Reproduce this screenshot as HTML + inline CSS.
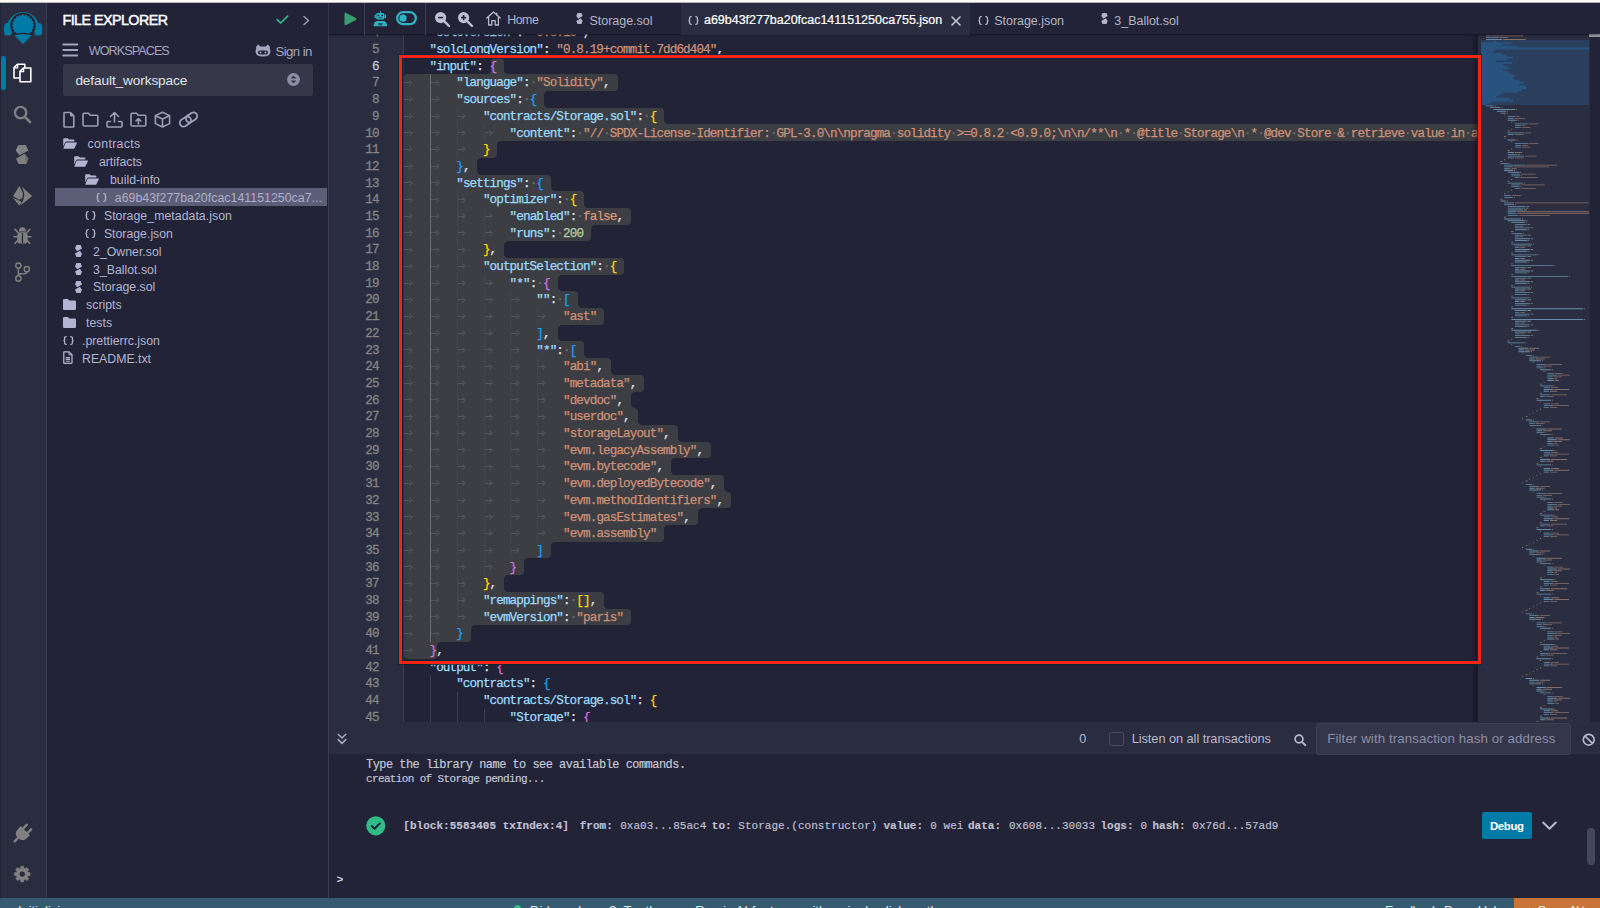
<!DOCTYPE html>
<html><head><meta charset="utf-8"><style>
*{margin:0;padding:0;box-sizing:border-box}
html,body{width:1600px;height:908px;overflow:hidden;background:#222336;font-family:"Liberation Sans",sans-serif}
.a{position:absolute}
.full{position:absolute;left:0;top:0;width:1600px;height:908px}

.code{position:absolute;font-family:"Liberation Mono",monospace;font-size:12.6px;letter-spacing:-0.885px;line-height:16.695px;white-space:pre;height:16.695px;-webkit-text-stroke:0.25px currentColor}
.k{color:#9cdcfe} .s{color:#ce9178} .f{color:#d99a7c} .n{color:#b5cea8} .p{color:#e0e0e0}
.b0{color:#ffd700} .b1{color:#da70d6} .b2{color:#179fff}
.ws{color:#6a6b70}
.sel{position:absolute;background:#3d3e43}
.arrow{position:absolute;width:7px;height:4px}
.arrow:before{content:"";position:absolute;left:0;top:1.5px;width:6px;height:1px;background:#55565b}
.arrow:after{content:"";position:absolute;left:3.5px;top:0;width:2.5px;height:2.5px;border-top:1px solid #55565b;border-right:1px solid #55565b;transform:rotate(45deg)}
</style></head>
<body>
<div class="a" style="left:0;top:0;width:1600px;height:3px;background:linear-gradient(#fdf9f6 0%, #fdf9f6 55%, #9a9096 100%)"></div>
<div class="a" style="left:0;top:3px;width:47px;height:895px;background:#2a2c3f;border-right:1px solid #3a3d51"></div>
<div class="a" style="left:0;top:3px;width:1px;height:895px;background:#232436"></div>
<div class="a" style="left:1px;top:56px;width:4.5px;height:34px;background:#007aa6;border-radius:3px"></div>
<svg class="a" style="left:0px;top:0px;overflow:visible" width="47" height="47" viewBox="0 0 47 47"><path d="M8.6 28 A14.4 14.4 0 0 1 37.4 28" fill="none" stroke="#007aa6" stroke-width="3.2"/><rect x="4" y="23" width="8" height="12.6" rx="3.6" fill="#007aa6"/><rect x="34.2" y="23" width="8" height="12.6" rx="3.6" fill="#007aa6"/><circle cx="23" cy="25.4" r="12.6" fill="#2b1f2d"/><path d="M22.34 14.22 L23.22 14.20 L23.97 15.55 L24.74 15.65 L25.83 14.56 L26.67 14.82 L26.97 16.33 L27.67 16.67 L29.04 15.97 L29.76 16.47 L29.58 18.00 L30.14 18.54 L31.66 18.29 L32.19 19.00 L31.54 20.39 L31.91 21.08 L33.43 21.32 L33.72 22.15 L32.67 23.28 L32.81 24.04 L34.18 24.74 L34.20 25.62 L32.85 26.37 L32.75 27.14 L33.84 28.23 L33.58 29.07 L32.07 29.37 L31.73 30.07 L32.43 31.44 L31.93 32.16 L30.40 31.98 L29.86 32.54 L30.11 34.06 L29.40 34.59 L28.01 33.94 L27.32 34.31 L27.08 35.83 L26.25 36.12 L25.12 35.07 L24.36 35.21 L23.66 36.58 L22.78 36.60 L22.03 35.25 L21.26 35.15 L20.17 36.24 L19.33 35.98 L19.03 34.47 L18.33 34.13 L16.96 34.83 L16.24 34.33 L16.42 32.80 L15.86 32.26 L14.34 32.51 L13.81 31.80 L14.46 30.41 L14.09 29.72 L12.57 29.48 L12.28 28.65 L13.33 27.52 L13.19 26.76 L11.82 26.06 L11.80 25.18 L13.15 24.43 L13.25 23.66 L12.16 22.57 L12.42 21.73 L13.93 21.43 L14.27 20.73 L13.57 19.36 L14.07 18.64 L15.60 18.82 L16.14 18.26 L15.89 16.74 L16.60 16.21 L17.99 16.86 L18.68 16.49 L18.92 14.97 L19.75 14.68 L20.88 15.73 L21.64 15.59 Z" fill="#007aa6"/><path d="M13.6 34.6 Q23 31.4 32.4 34.6 L23 44.2 Z" fill="#007aa6"/><path d="M13.2 35 Q23 31.8 32.8 35" fill="none" stroke="#2b1f2d" stroke-width="1.1"/></svg>
<svg class="a" style="left:13px;top:63px;overflow:visible" width="20" height="21" viewBox="0 0 20 21"><g transform="translate(0.2 0.4)"><path d="M4.2 0.8 H11.6 V14.6 H0.8 V4.2 Z" fill="none" stroke="#ffffff" stroke-width="1.6" stroke-linejoin="round"/><path d="M0.8 4.4 H4.4 V0.8" fill="none" stroke="#ffffff" stroke-width="1.3"/></g><g transform="translate(6.2 4.2)"><path d="M4.2 0.8 H11.6 V14.6 H0.8 V4.2 Z" fill="#2a2c3f" stroke="#ffffff" stroke-width="1.6" stroke-linejoin="round"/><path d="M0.8 4.4 H4.4 V0.8" fill="none" stroke="#ffffff" stroke-width="1.3"/></g></svg>
<svg class="a" style="left:13px;top:104.5px;overflow:visible" width="19" height="19" viewBox="0 0 19 19"><circle cx="7.6" cy="7.6" r="5.7" fill="none" stroke="#808080" stroke-width="2.4"/><path d="M11.8 11.8 L17 17" stroke="#808080" stroke-width="2.6" stroke-linecap="round"/></svg>
<svg class="a" style="left:15.85px;top:144.9px;overflow:visible" width="12.4" height="19" viewBox="0 0 12.4 19"><path d="M2.4 0 H9.8 L12.4 5.6 L3.7 10.3 L0 5.4 Z" fill="#808080"/><path d="M2.4 0 L0 5.4 L3.7 10.3 Z" fill="#8e8e8e"/><path d="M10 19 H2.6 L0 13.4 L8.7 8.7 L12.4 13.6 Z" fill="#808080"/><path d="M10 19 L12.4 13.6 L8.7 8.7 Z" fill="#6e6e6e"/></svg>
<svg class="a" style="left:12.5px;top:185.6px;overflow:visible" width="19.2" height="19.8" viewBox="0 0 19.2 19.8"><g fill="#808080"><path d="M6.2 0 L0 10.2 L6.2 13.8 L9 12.2 Q10.4 9.8 9.8 6.4 Z"/><path d="M0 11.8 L6.2 19.6 L8.6 16.4 L8 15.4 Z"/><path d="M8.6 0.6 Q12 6 11 11.6 Q10.6 14.6 7.6 19.4 L19.2 10 Z"/></g></svg>
<svg class="a" style="left:14px;top:227px;overflow:visible" width="17" height="17" viewBox="0 0 17 17"><path d="M4.8 4.6 Q5 0.3 8.4 0.3 Q11.8 0.3 12 4.6 Z" fill="#808080"/><rect x="3.2" y="5.2" width="10.4" height="11.4" rx="3.4" fill="#808080"/><rect x="7.8" y="6.2" width="1.3" height="10" fill="#2a2c3f"/><path d="M1 2.4 L4.2 5.6 M15.8 2.4 L12.6 5.6 M0 9.8 H3.6 M16.8 9.8 H13.2 M1 16.4 L4 13.4 M15.8 16.4 L12.8 13.4" stroke="#808080" stroke-width="1.5" stroke-linecap="round"/></svg>
<svg class="a" style="left:14.5px;top:261.5px;overflow:visible" width="15.5" height="20.5" viewBox="0 0 15.5 20.5"><g fill="none" stroke="#808080" stroke-width="1.5"><circle cx="3.4" cy="3.6" r="2.6"/><circle cx="3.4" cy="16.4" r="2.6"/><circle cx="11.8" cy="7.2" r="2.6"/><path d="M3.4 6.2 V13.8 M11.8 9.8 Q11.8 11.8 9.2 11.8 H5.6 Q3.4 11.8 3.4 13.8"/></g></svg>
<svg class="a" style="left:12.3px;top:823.6px;overflow:visible" width="20" height="20" viewBox="0 0 20 20"><g transform="rotate(45 10 10)"><path d="M3.6 5.2 H16.4 V9.6 Q16.4 15.6 10 15.6 Q3.6 15.6 3.6 9.6 Z" fill="#808080"/><rect x="5.6" y="-1" width="2.5" height="6.6" rx="1.2" fill="#808080"/><rect x="11.9" y="-1" width="2.5" height="6.6" rx="1.2" fill="#808080"/><rect x="8.8" y="15" width="2.4" height="6.6" rx="1.2" fill="#808080"/></g></svg>
<svg class="a" style="left:13.8px;top:866.2px;overflow:visible" width="16.5" height="16.2" viewBox="0 0 16.5 16.2"><path d="M6.60 2.33 L6.79 0.23 L9.71 0.23 L9.90 2.33 L11.16 2.85 L12.78 1.51 L14.84 3.57 L13.50 5.19 L14.02 6.45 L16.12 6.64 L16.12 9.56 L14.02 9.75 L13.50 11.01 L14.84 12.63 L12.78 14.69 L11.16 13.35 L9.90 13.87 L9.71 15.97 L6.79 15.97 L6.60 13.87 L5.34 13.35 L3.72 14.69 L1.66 12.63 L3.00 11.01 L2.48 9.75 L0.38 9.56 L0.38 6.64 L2.48 6.45 L3.00 5.19 L1.66 3.57 L3.72 1.51 L5.34 2.85 Z" fill="#808080" stroke="#808080" stroke-width="0.6" stroke-linejoin="round"/><circle cx="8.25" cy="8.1" r="2.7" fill="#2a2c3f"/></svg>
<div class="a" style="left:47px;top:3px;width:282px;height:895px;background:#222336;border-right:1px solid #3a3d51"></div>
<div class="a " style="left:62.50px;top:9.95px;height:20px;line-height:20px;font-family:'Liberation Sans',sans-serif;font-size:14.3px;font-weight:400;color:#ffffff;white-space:pre;letter-spacing:-0.546px;-webkit-text-stroke:0.45px #ffffff;">FILE EXPLORER</div>
<svg class="a" style="left:276px;top:15px;overflow:visible" width="13" height="10" viewBox="0 0 13 10"><path d="M1.2 4.6 L4.6 8 L11.6 1.2" fill="none" stroke="#32ba89" stroke-width="1.7" stroke-linecap="round" stroke-linejoin="round"/></svg>
<svg class="a" style="left:302px;top:15px;overflow:visible" width="9" height="11" viewBox="0 0 9 11"><path d="M2 1.5 L6.5 5.5 L2 9.5" fill="none" stroke="#9a9bb0" stroke-width="1.6" stroke-linecap="round" stroke-linejoin="round"/></svg>
<svg class="a" style="left:62px;top:43px;overflow:visible" width="17" height="14" viewBox="0 0 17 14"><path d="M1.3 1.5 H15.3 M1.3 7 H15.3 M1.3 12.5 H15.3" stroke="#a4a5c0" stroke-width="1.9" stroke-linecap="round"/></svg>
<div class="a " style="left:88.80px;top:41.93px;height:18px;line-height:18px;font-family:'Liberation Sans',sans-serif;font-size:12.6px;font-weight:400;color:#a4a5c0;white-space:pre;letter-spacing:-0.932px;">WORKSPACES</div>
<svg class="a" style="left:255px;top:44px;overflow:visible" width="16" height="13" viewBox="0 0 16 13"><path d="M1.2 2.5 L3.2 0.6 L5.4 2.6 H10.6 L12.8 0.6 L14.8 2.5 V5 Q15.6 6.4 15.4 8.2 Q15 12.4 8 12.4 Q1 12.4 0.6 8.2 Q0.4 6.4 1.2 5 Z" fill="#a4a5c0"/><rect x="3" y="6.6" width="10" height="3.8" rx="1.9" fill="#222336"/><circle cx="5.6" cy="8.5" r="0.9" fill="#a4a5c0"/><circle cx="10.4" cy="8.5" r="0.9" fill="#a4a5c0"/></svg>
<div class="a " style="left:275.40px;top:42.63px;height:18px;line-height:18px;font-family:'Liberation Sans',sans-serif;font-size:13.2px;font-weight:400;color:#a4a5c0;white-space:pre;letter-spacing:-0.560px;">Sign in</div>
<div class="a" style="left:63px;top:64px;width:249.5px;height:32px;background:#363849;border-radius:3px"></div>
<div class="a " style="left:75.40px;top:70.69px;height:19px;line-height:19px;font-family:'Liberation Sans',sans-serif;font-size:13.6px;font-weight:400;color:#e2e2ec;white-space:pre;letter-spacing:-0.088px;">default_workspace</div>
<svg class="a" style="left:287px;top:73px;overflow:visible" width="13" height="13" viewBox="0 0 13 13"><circle cx="6.5" cy="6.5" r="6.4" fill="#8d8ea4"/><path d="M3.6 5.6 L6.5 2.6 L9.4 5.6 Z M3.6 7.4 L6.5 10.4 L9.4 7.4 Z" fill="#363849"/></svg>
<svg class="a" style="left:63px;top:111px;overflow:visible" width="12" height="17" viewBox="0 0 12 17"><path d="M1.5 1.5 H7.5 L10.8 4.8 V15.5 Q10.8 16 10.3 16 H1.7 Q1 16 1 15.3 V2 Q1 1.5 1.5 1.5 Z" fill="none" stroke="#9c9db8" stroke-width="1.6" stroke-linejoin="round" stroke-linecap="round"/><path d="M7.5 1.5 V5 H10.8" fill="#9c9db8" stroke="#9c9db8" stroke-width="1"/></svg>
<svg class="a" style="left:82px;top:112px;overflow:visible" width="17" height="15" viewBox="0 0 17 15"><path d="M2 1.3 H6.5 L8.3 3.3 H14.5 Q15.8 3.3 15.8 4.6 V12.8 Q15.8 14 14.5 14 H2.3 Q1 14 1 12.8 V2.5 Q1 1.3 2 1.3 Z" fill="none" stroke="#9c9db8" stroke-width="1.6" stroke-linejoin="round" stroke-linecap="round"/></svg>
<svg class="a" style="left:106px;top:111px;overflow:visible" width="17" height="17" viewBox="0 0 17 17"><path d="M8.5 1.5 V11 M4.5 5.5 L8.5 1.5 L12.5 5.5" fill="none" stroke="#9c9db8" stroke-width="1.6" stroke-linejoin="round" stroke-linecap="round"/><path d="M4.5 10.5 H2 Q1 10.5 1 11.5 V15 Q1 16 2 16 H15 Q16 16 16 15 V11.5 Q16 10.5 15 10.5 H12.5" fill="none" stroke="#9c9db8" stroke-width="1.6" stroke-linejoin="round" stroke-linecap="round"/></svg>
<svg class="a" style="left:130px;top:112px;overflow:visible" width="17" height="15" viewBox="0 0 17 15"><path d="M2 1.3 H6.5 L8.3 3.3 H14.5 Q15.8 3.3 15.8 4.6 V12.8 Q15.8 14 14.5 14 H2.3 Q1 14 1 12.8 V2.5 Q1 1.3 2 1.3 Z" fill="none" stroke="#9c9db8" stroke-width="1.6" stroke-linejoin="round" stroke-linecap="round"/><path d="M8.4 12 V7 M6 9 L8.4 6.6 L10.8 9" fill="none" stroke="#9c9db8" stroke-width="1.6" stroke-linejoin="round" stroke-linecap="round" stroke-width="1.8"/></svg>
<svg class="a" style="left:154px;top:111px;overflow:visible" width="17" height="17" viewBox="0 0 17 17"><path d="M8.5 1.2 L15.6 4.6 V12.6 L8.5 16 L1.4 12.6 V4.6 Z M1.6 4.7 L8.5 8 L15.4 4.7 M8.5 8 V15.8" fill="none" stroke="#9c9db8" stroke-width="1.6" stroke-linejoin="round" stroke-linecap="round"/></svg>
<svg class="a" style="left:177.5px;top:111px;overflow:visible" width="21" height="17" viewBox="0 0 21 17"><g transform="rotate(-34 10.5 8.5)" fill="none" stroke="#9c9db8" stroke-width="1.9"><rect x="0.8" y="4.8" width="12" height="7.4" rx="3.7"/><rect x="8.2" y="4.8" width="12" height="7.4" rx="3.7"/></g></svg>
<div class="a" style="left:55.3px;top:188.4px;width:272.2px;height:17.9px;background:#5c5e78"></div>
<svg class="a" style="left:62.9px;top:138.0px;overflow:visible" width="14" height="11" viewBox="0 0 14 11"><path d="M0.2 1.2 Q0.2 0.2 1.2 0.2 H4.6 L6 1.6 H10.4 Q11.4 1.6 11.4 2.6 V3.6 H3.2 Q2.4 3.6 2 4.4 L0.2 8.6 Z" fill="#b3b4d2"/><path d="M3.2 4.6 H13.4 Q14.2 4.6 13.8 5.4 L11.4 10.2 Q11.1 10.8 10.4 10.8 H0.8 Q0.2 10.8 0.4 10.2 L2.4 5.2 Q2.6 4.6 3.2 4.6 Z" fill="#b3b4d2"/></svg>
<div class="a " style="left:87.60px;top:136.44px;height:17px;line-height:17px;font-family:'Liberation Sans',sans-serif;font-size:12.3px;font-weight:400;color:#b3b4d2;white-space:pre;letter-spacing:0.325px;">contracts</div>
<svg class="a" style="left:73.6px;top:155.88px;overflow:visible" width="14" height="11" viewBox="0 0 14 11"><path d="M0.2 1.2 Q0.2 0.2 1.2 0.2 H4.6 L6 1.6 H10.4 Q11.4 1.6 11.4 2.6 V3.6 H3.2 Q2.4 3.6 2 4.4 L0.2 8.6 Z" fill="#b3b4d2"/><path d="M3.2 4.6 H13.4 Q14.2 4.6 13.8 5.4 L11.4 10.2 Q11.1 10.8 10.4 10.8 H0.8 Q0.2 10.8 0.4 10.2 L2.4 5.2 Q2.6 4.6 3.2 4.6 Z" fill="#b3b4d2"/></svg>
<div class="a " style="left:98.90px;top:154.32px;height:17px;line-height:17px;font-family:'Liberation Sans',sans-serif;font-size:12.3px;font-weight:400;color:#b3b4d2;white-space:pre;">artifacts</div>
<svg class="a" style="left:84.6px;top:173.76px;overflow:visible" width="14" height="11" viewBox="0 0 14 11"><path d="M0.2 1.2 Q0.2 0.2 1.2 0.2 H4.6 L6 1.6 H10.4 Q11.4 1.6 11.4 2.6 V3.6 H3.2 Q2.4 3.6 2 4.4 L0.2 8.6 Z" fill="#b3b4d2"/><path d="M3.2 4.6 H13.4 Q14.2 4.6 13.8 5.4 L11.4 10.2 Q11.1 10.8 10.4 10.8 H0.8 Q0.2 10.8 0.4 10.2 L2.4 5.2 Q2.6 4.6 3.2 4.6 Z" fill="#b3b4d2"/></svg>
<div class="a " style="left:110.00px;top:172.20px;height:17px;line-height:17px;font-family:'Liberation Sans',sans-serif;font-size:12.3px;font-weight:400;color:#b3b4d2;white-space:pre;">build-info</div>
<svg class="a" style="left:96.4px;top:193.04000000000002px;overflow:visible" width="11" height="9" viewBox="0 0 11 9"><path d="M3.2 0.6 Q1.6 0.6 1.6 2 V3.4 Q1.6 4.5 0.5 4.5 Q1.6 4.5 1.6 5.6 V7 Q1.6 8.4 3.2 8.4 M7.8 0.6 Q9.4 0.6 9.4 2 V3.4 Q9.4 4.5 10.5 4.5 Q9.4 4.5 9.4 5.6 V7 Q9.4 8.4 7.8 8.4" fill="none" stroke="#aeafc8" stroke-width="1.3" stroke-linecap="round"/></svg>
<div class="a " style="left:114.75px;top:190.08px;height:17px;line-height:17px;font-family:'Liberation Sans',sans-serif;font-size:12.3px;font-weight:400;color:#aeafc8;white-space:pre;letter-spacing:0.049px;">a69b43f277ba20fcac141151250ca7...</div>
<svg class="a" style="left:85.0px;top:210.92000000000002px;overflow:visible" width="11" height="9" viewBox="0 0 11 9"><path d="M3.2 0.6 Q1.6 0.6 1.6 2 V3.4 Q1.6 4.5 0.5 4.5 Q1.6 4.5 1.6 5.6 V7 Q1.6 8.4 3.2 8.4 M7.8 0.6 Q9.4 0.6 9.4 2 V3.4 Q9.4 4.5 10.5 4.5 Q9.4 4.5 9.4 5.6 V7 Q9.4 8.4 7.8 8.4" fill="none" stroke="#b3b4d2" stroke-width="1.3" stroke-linecap="round"/></svg>
<div class="a " style="left:103.90px;top:207.96px;height:17px;line-height:17px;font-family:'Liberation Sans',sans-serif;font-size:12.3px;font-weight:400;color:#b3b4d2;white-space:pre;letter-spacing:0.041px;">Storage_metadata.json</div>
<svg class="a" style="left:85.0px;top:228.8px;overflow:visible" width="11" height="9" viewBox="0 0 11 9"><path d="M3.2 0.6 Q1.6 0.6 1.6 2 V3.4 Q1.6 4.5 0.5 4.5 Q1.6 4.5 1.6 5.6 V7 Q1.6 8.4 3.2 8.4 M7.8 0.6 Q9.4 0.6 9.4 2 V3.4 Q9.4 4.5 10.5 4.5 Q9.4 4.5 9.4 5.6 V7 Q9.4 8.4 7.8 8.4" fill="none" stroke="#b3b4d2" stroke-width="1.3" stroke-linecap="round"/></svg>
<div class="a " style="left:103.90px;top:225.84px;height:17px;line-height:17px;font-family:'Liberation Sans',sans-serif;font-size:12.3px;font-weight:400;color:#b3b4d2;white-space:pre;">Storage.json</div>
<svg class="a" style="left:75.3px;top:245.48px;overflow:visible" width="7" height="12" viewBox="0 0 7 12"><g fill="#b3b4d2"><path d="M1.4 0 H5.6 L7 3.4 L2.1 6.3 L0 3.2 Z"/><path d="M5.6 12 H1.4 L0 8.6 L4.9 5.7 L7 8.8 Z"/></g></svg>
<div class="a " style="left:93.10px;top:243.72px;height:17px;line-height:17px;font-family:'Liberation Sans',sans-serif;font-size:12.3px;font-weight:400;color:#b3b4d2;white-space:pre;">2_Owner.sol</div>
<svg class="a" style="left:75.3px;top:263.36px;overflow:visible" width="7" height="12" viewBox="0 0 7 12"><g fill="#b3b4d2"><path d="M1.4 0 H5.6 L7 3.4 L2.1 6.3 L0 3.2 Z"/><path d="M5.6 12 H1.4 L0 8.6 L4.9 5.7 L7 8.8 Z"/></g></svg>
<div class="a " style="left:93.10px;top:261.60px;height:17px;line-height:17px;font-family:'Liberation Sans',sans-serif;font-size:12.3px;font-weight:400;color:#b3b4d2;white-space:pre;">3_Ballot.sol</div>
<svg class="a" style="left:75.3px;top:281.24px;overflow:visible" width="7" height="12" viewBox="0 0 7 12"><g fill="#b3b4d2"><path d="M1.4 0 H5.6 L7 3.4 L2.1 6.3 L0 3.2 Z"/><path d="M5.6 12 H1.4 L0 8.6 L4.9 5.7 L7 8.8 Z"/></g></svg>
<div class="a " style="left:93.10px;top:279.48px;height:17px;line-height:17px;font-family:'Liberation Sans',sans-serif;font-size:12.3px;font-weight:400;color:#b3b4d2;white-space:pre;">Storage.sol</div>
<svg class="a" style="left:62.6px;top:299.12px;overflow:visible" width="13" height="11" viewBox="0 0 13 11"><path d="M0 1.2 Q0 0 1.2 0 H4.8 L6.3 1.6 H11.8 Q13 1.6 13 2.8 V9.8 Q13 11 11.8 11 H1.2 Q0 11 0 9.8 Z" fill="#b3b4d2"/></svg>
<div class="a " style="left:86.10px;top:297.36px;height:17px;line-height:17px;font-family:'Liberation Sans',sans-serif;font-size:12.3px;font-weight:400;color:#b3b4d2;white-space:pre;">scripts</div>
<svg class="a" style="left:62.6px;top:317.0px;overflow:visible" width="13" height="11" viewBox="0 0 13 11"><path d="M0 1.2 Q0 0 1.2 0 H4.8 L6.3 1.6 H11.8 Q13 1.6 13 2.8 V9.8 Q13 11 11.8 11 H1.2 Q0 11 0 9.8 Z" fill="#b3b4d2"/></svg>
<div class="a " style="left:86.10px;top:315.24px;height:17px;line-height:17px;font-family:'Liberation Sans',sans-serif;font-size:12.3px;font-weight:400;color:#b3b4d2;white-space:pre;">tests</div>
<svg class="a" style="left:62.6px;top:336.08px;overflow:visible" width="11" height="9" viewBox="0 0 11 9"><path d="M3.2 0.6 Q1.6 0.6 1.6 2 V3.4 Q1.6 4.5 0.5 4.5 Q1.6 4.5 1.6 5.6 V7 Q1.6 8.4 3.2 8.4 M7.8 0.6 Q9.4 0.6 9.4 2 V3.4 Q9.4 4.5 10.5 4.5 Q9.4 4.5 9.4 5.6 V7 Q9.4 8.4 7.8 8.4" fill="none" stroke="#b3b4d2" stroke-width="1.3" stroke-linecap="round"/></svg>
<div class="a " style="left:82.00px;top:333.12px;height:17px;line-height:17px;font-family:'Liberation Sans',sans-serif;font-size:12.3px;font-weight:400;color:#b3b4d2;white-space:pre;">.prettierrc.json</div>
<svg class="a" style="left:62.6px;top:351.35999999999996px;overflow:visible" width="10" height="13" viewBox="0 0 10 13"><path d="M1.3 0.8 H6 L9 3.8 V11.8 Q9 12.3 8.5 12.3 H1.3 Q0.8 12.3 0.8 11.8 V1.3 Q0.8 0.8 1.3 0.8 Z" fill="none" stroke="#b3b4d2" stroke-width="1.3"/><path d="M2.8 6.6 H7 M2.8 8.4 H7 M2.8 10.2 H7" stroke="#b3b4d2" stroke-width="1.1"/><path d="M6 0.8 V3.8 H9" fill="none" stroke="#b3b4d2" stroke-width="1"/></svg>
<div class="a " style="left:82.00px;top:351.00px;height:17px;line-height:17px;font-family:'Liberation Sans',sans-serif;font-size:12.3px;font-weight:400;color:#b3b4d2;white-space:pre;">README.txt</div>
<div class="a" style="left:329px;top:35px;width:75px;height:687px;background:#2a2c3f"></div>
<div class="a" style="left:404px;top:35px;width:1077px;height:687px;background:#222336"></div>
<div class="full" style="clip-path:inset(34.4px 119px 186px 329px)"><div class="sel" style="left:490.77px;top:58px;width:13.35px;height:16px;border-radius:4px 4px 0px 0px"></div>
<div class="sel" style="left:404.00px;top:74px;width:213.60px;height:17px;border-radius:4px 4px 4px 0px"></div>
<div class="sel" style="left:404.00px;top:91px;width:140.17px;height:17px;border-radius:0px 0px 0px 0px"></div>
<div class="sel" style="left:404.00px;top:108px;width:260.32px;height:16px;border-radius:0px 4px 0px 0px"></div>
<div class="sel" style="left:404.00px;top:124px;width:1708.80px;height:17px;border-radius:0px 4px 4px 0px"></div>
<div class="sel" style="left:404.00px;top:141px;width:93.45px;height:17px;border-radius:0px 0px 4px 0px"></div>
<div class="sel" style="left:404.00px;top:158px;width:73.42px;height:17px;border-radius:0px 0px 0px 0px"></div>
<div class="sel" style="left:404.00px;top:175px;width:146.85px;height:16px;border-radius:0px 4px 0px 0px"></div>
<div class="sel" style="left:404.00px;top:191px;width:180.22px;height:17px;border-radius:0px 4px 0px 0px"></div>
<div class="sel" style="left:404.00px;top:208px;width:226.95px;height:17px;border-radius:0px 4px 4px 0px"></div>
<div class="sel" style="left:404.00px;top:225px;width:186.90px;height:16px;border-radius:0px 0px 4px 0px"></div>
<div class="sel" style="left:404.00px;top:241px;width:100.12px;height:17px;border-radius:0px 0px 0px 0px"></div>
<div class="sel" style="left:404.00px;top:258px;width:220.28px;height:17px;border-radius:0px 4px 4px 0px"></div>
<div class="sel" style="left:404.00px;top:275px;width:153.53px;height:16px;border-radius:0px 0px 0px 0px"></div>
<div class="sel" style="left:404.00px;top:291px;width:173.55px;height:17px;border-radius:0px 4px 0px 0px"></div>
<div class="sel" style="left:404.00px;top:308px;width:200.25px;height:17px;border-radius:0px 4px 4px 0px"></div>
<div class="sel" style="left:404.00px;top:325px;width:153.53px;height:16px;border-radius:0px 0px 0px 0px"></div>
<div class="sel" style="left:404.00px;top:341px;width:180.22px;height:17px;border-radius:0px 4px 0px 0px"></div>
<div class="sel" style="left:404.00px;top:358px;width:206.92px;height:17px;border-radius:0px 4px 0px 0px"></div>
<div class="sel" style="left:404.00px;top:375px;width:240.30px;height:17px;border-radius:0px 4px 4px 0px"></div>
<div class="sel" style="left:404.00px;top:392px;width:226.95px;height:16px;border-radius:0px 0px 0px 0px"></div>
<div class="sel" style="left:404.00px;top:408px;width:233.62px;height:17px;border-radius:0px 4px 0px 0px"></div>
<div class="sel" style="left:404.00px;top:425px;width:273.68px;height:17px;border-radius:0px 4px 0px 0px"></div>
<div class="sel" style="left:404.00px;top:442px;width:307.05px;height:16px;border-radius:0px 4px 4px 0px"></div>
<div class="sel" style="left:404.00px;top:458px;width:267.00px;height:17px;border-radius:0px 0px 0px 0px"></div>
<div class="sel" style="left:404.00px;top:475px;width:320.40px;height:17px;border-radius:0px 4px 0px 0px"></div>
<div class="sel" style="left:404.00px;top:492px;width:327.07px;height:16px;border-radius:0px 4px 4px 0px"></div>
<div class="sel" style="left:404.00px;top:508px;width:293.70px;height:17px;border-radius:0px 0px 4px 0px"></div>
<div class="sel" style="left:404.00px;top:525px;width:260.32px;height:17px;border-radius:0px 0px 4px 0px"></div>
<div class="sel" style="left:404.00px;top:542px;width:146.85px;height:16px;border-radius:0px 0px 4px 0px"></div>
<div class="sel" style="left:404.00px;top:558px;width:120.15px;height:17px;border-radius:0px 0px 4px 0px"></div>
<div class="sel" style="left:404.00px;top:575px;width:100.12px;height:17px;border-radius:0px 0px 0px 0px"></div>
<div class="sel" style="left:404.00px;top:592px;width:200.25px;height:17px;border-radius:0px 4px 0px 0px"></div>
<div class="sel" style="left:404.00px;top:609px;width:226.95px;height:16px;border-radius:0px 4px 4px 0px"></div>
<div class="sel" style="left:404.00px;top:625px;width:66.75px;height:17px;border-radius:0px 0px 4px 0px"></div>
<div class="sel" style="left:404.00px;top:642px;width:33.38px;height:17px;border-radius:0px 0px 4px 4px"></div>
<div class="a" style="left:504.12px;top:70px;width:4px;height:4px;background:radial-gradient(circle at 100% 0%, transparent 3.7px, #3d3e43 4px)"></div>
<div class="a" style="left:486.77px;top:70px;width:4px;height:4px;background:radial-gradient(circle at 0% 0%, transparent 3.7px, #3d3e43 4px)"></div>
<div class="a" style="left:544.17px;top:91px;width:4px;height:4px;background:radial-gradient(circle at 100% 100%, transparent 3.7px, #3d3e43 4px)"></div>
<div class="a" style="left:544.17px;top:104px;width:4px;height:4px;background:radial-gradient(circle at 100% 0%, transparent 3.7px, #3d3e43 4px)"></div>
<div class="a" style="left:664.33px;top:120px;width:4px;height:4px;background:radial-gradient(circle at 100% 0%, transparent 3.7px, #3d3e43 4px)"></div>
<div class="a" style="left:497.45px;top:141px;width:4px;height:4px;background:radial-gradient(circle at 100% 100%, transparent 3.7px, #3d3e43 4px)"></div>
<div class="a" style="left:477.43px;top:158px;width:4px;height:4px;background:radial-gradient(circle at 100% 100%, transparent 3.7px, #3d3e43 4px)"></div>
<div class="a" style="left:477.43px;top:171px;width:4px;height:4px;background:radial-gradient(circle at 100% 0%, transparent 3.7px, #3d3e43 4px)"></div>
<div class="a" style="left:550.85px;top:187px;width:4px;height:4px;background:radial-gradient(circle at 100% 0%, transparent 3.7px, #3d3e43 4px)"></div>
<div class="a" style="left:584.23px;top:204px;width:4px;height:4px;background:radial-gradient(circle at 100% 0%, transparent 3.7px, #3d3e43 4px)"></div>
<div class="a" style="left:590.90px;top:225px;width:4px;height:4px;background:radial-gradient(circle at 100% 100%, transparent 3.7px, #3d3e43 4px)"></div>
<div class="a" style="left:504.12px;top:241px;width:4px;height:4px;background:radial-gradient(circle at 100% 100%, transparent 3.7px, #3d3e43 4px)"></div>
<div class="a" style="left:504.12px;top:254px;width:4px;height:4px;background:radial-gradient(circle at 100% 0%, transparent 3.7px, #3d3e43 4px)"></div>
<div class="a" style="left:557.52px;top:275px;width:4px;height:4px;background:radial-gradient(circle at 100% 100%, transparent 3.7px, #3d3e43 4px)"></div>
<div class="a" style="left:557.52px;top:287px;width:4px;height:4px;background:radial-gradient(circle at 100% 0%, transparent 3.7px, #3d3e43 4px)"></div>
<div class="a" style="left:577.55px;top:304px;width:4px;height:4px;background:radial-gradient(circle at 100% 0%, transparent 3.7px, #3d3e43 4px)"></div>
<div class="a" style="left:557.52px;top:325px;width:4px;height:4px;background:radial-gradient(circle at 100% 100%, transparent 3.7px, #3d3e43 4px)"></div>
<div class="a" style="left:557.52px;top:337px;width:4px;height:4px;background:radial-gradient(circle at 100% 0%, transparent 3.7px, #3d3e43 4px)"></div>
<div class="a" style="left:584.23px;top:354px;width:4px;height:4px;background:radial-gradient(circle at 100% 0%, transparent 3.7px, #3d3e43 4px)"></div>
<div class="a" style="left:610.92px;top:371px;width:4px;height:4px;background:radial-gradient(circle at 100% 0%, transparent 3.7px, #3d3e43 4px)"></div>
<div class="a" style="left:630.95px;top:392px;width:4px;height:4px;background:radial-gradient(circle at 100% 100%, transparent 3.7px, #3d3e43 4px)"></div>
<div class="a" style="left:630.95px;top:404px;width:4px;height:4px;background:radial-gradient(circle at 100% 0%, transparent 3.7px, #3d3e43 4px)"></div>
<div class="a" style="left:637.62px;top:421px;width:4px;height:4px;background:radial-gradient(circle at 100% 0%, transparent 3.7px, #3d3e43 4px)"></div>
<div class="a" style="left:677.67px;top:438px;width:4px;height:4px;background:radial-gradient(circle at 100% 0%, transparent 3.7px, #3d3e43 4px)"></div>
<div class="a" style="left:671.00px;top:458px;width:4px;height:4px;background:radial-gradient(circle at 100% 100%, transparent 3.7px, #3d3e43 4px)"></div>
<div class="a" style="left:671.00px;top:471px;width:4px;height:4px;background:radial-gradient(circle at 100% 0%, transparent 3.7px, #3d3e43 4px)"></div>
<div class="a" style="left:724.40px;top:488px;width:4px;height:4px;background:radial-gradient(circle at 100% 0%, transparent 3.7px, #3d3e43 4px)"></div>
<div class="a" style="left:697.70px;top:508px;width:4px;height:4px;background:radial-gradient(circle at 100% 100%, transparent 3.7px, #3d3e43 4px)"></div>
<div class="a" style="left:664.33px;top:525px;width:4px;height:4px;background:radial-gradient(circle at 100% 100%, transparent 3.7px, #3d3e43 4px)"></div>
<div class="a" style="left:550.85px;top:542px;width:4px;height:4px;background:radial-gradient(circle at 100% 100%, transparent 3.7px, #3d3e43 4px)"></div>
<div class="a" style="left:524.15px;top:558px;width:4px;height:4px;background:radial-gradient(circle at 100% 100%, transparent 3.7px, #3d3e43 4px)"></div>
<div class="a" style="left:504.12px;top:575px;width:4px;height:4px;background:radial-gradient(circle at 100% 100%, transparent 3.7px, #3d3e43 4px)"></div>
<div class="a" style="left:504.12px;top:588px;width:4px;height:4px;background:radial-gradient(circle at 100% 0%, transparent 3.7px, #3d3e43 4px)"></div>
<div class="a" style="left:604.25px;top:605px;width:4px;height:4px;background:radial-gradient(circle at 100% 0%, transparent 3.7px, #3d3e43 4px)"></div>
<div class="a" style="left:470.75px;top:625px;width:4px;height:4px;background:radial-gradient(circle at 100% 100%, transparent 3.7px, #3d3e43 4px)"></div>
<div class="a" style="left:437.38px;top:642px;width:4px;height:4px;background:radial-gradient(circle at 100% 100%, transparent 3.7px, #3d3e43 4px)"></div>
<div class="a" style="left:403.45px;top:8px;width:1px;height:16px;background:#3e3f47"></div>
<div class="a" style="left:403.45px;top:24px;width:1px;height:17px;background:#3e3f47"></div>
<div class="a" style="left:403.45px;top:41px;width:1px;height:17px;background:#3e3f47"></div>
<div class="a" style="left:430.15px;top:74px;width:1.3px;height:17px;background:#6d6e73"></div>
<div class="a" style="left:430.15px;top:91px;width:1.3px;height:17px;background:#6d6e73"></div>
<div class="a" style="left:430.15px;top:108px;width:1.3px;height:16px;background:#6d6e73"></div>
<div class="a" style="left:456.85px;top:108px;width:1px;height:16px;background:#44454a"></div>
<div class="a" style="left:430.15px;top:124px;width:1.3px;height:17px;background:#6d6e73"></div>
<div class="a" style="left:456.85px;top:124px;width:1px;height:17px;background:#44454a"></div>
<div class="a" style="left:483.55px;top:124px;width:1px;height:17px;background:#44454a"></div>
<div class="a" style="left:430.15px;top:141px;width:1.3px;height:17px;background:#6d6e73"></div>
<div class="a" style="left:456.85px;top:141px;width:1px;height:17px;background:#44454a"></div>
<div class="a" style="left:430.15px;top:158px;width:1.3px;height:17px;background:#6d6e73"></div>
<div class="a" style="left:430.15px;top:175px;width:1.3px;height:16px;background:#6d6e73"></div>
<div class="a" style="left:430.15px;top:191px;width:1.3px;height:17px;background:#6d6e73"></div>
<div class="a" style="left:456.85px;top:191px;width:1px;height:17px;background:#44454a"></div>
<div class="a" style="left:430.15px;top:208px;width:1.3px;height:17px;background:#6d6e73"></div>
<div class="a" style="left:456.85px;top:208px;width:1px;height:17px;background:#44454a"></div>
<div class="a" style="left:483.55px;top:208px;width:1px;height:17px;background:#44454a"></div>
<div class="a" style="left:430.15px;top:225px;width:1.3px;height:16px;background:#6d6e73"></div>
<div class="a" style="left:456.85px;top:225px;width:1px;height:16px;background:#44454a"></div>
<div class="a" style="left:483.55px;top:225px;width:1px;height:16px;background:#44454a"></div>
<div class="a" style="left:430.15px;top:241px;width:1.3px;height:17px;background:#6d6e73"></div>
<div class="a" style="left:456.85px;top:241px;width:1px;height:17px;background:#44454a"></div>
<div class="a" style="left:430.15px;top:258px;width:1.3px;height:17px;background:#6d6e73"></div>
<div class="a" style="left:456.85px;top:258px;width:1px;height:17px;background:#44454a"></div>
<div class="a" style="left:430.15px;top:275px;width:1.3px;height:16px;background:#6d6e73"></div>
<div class="a" style="left:456.85px;top:275px;width:1px;height:16px;background:#44454a"></div>
<div class="a" style="left:483.55px;top:275px;width:1px;height:16px;background:#44454a"></div>
<div class="a" style="left:430.15px;top:291px;width:1.3px;height:17px;background:#6d6e73"></div>
<div class="a" style="left:456.85px;top:291px;width:1px;height:17px;background:#44454a"></div>
<div class="a" style="left:483.55px;top:291px;width:1px;height:17px;background:#44454a"></div>
<div class="a" style="left:510.25px;top:291px;width:1px;height:17px;background:#44454a"></div>
<div class="a" style="left:430.15px;top:308px;width:1.3px;height:17px;background:#6d6e73"></div>
<div class="a" style="left:456.85px;top:308px;width:1px;height:17px;background:#44454a"></div>
<div class="a" style="left:483.55px;top:308px;width:1px;height:17px;background:#44454a"></div>
<div class="a" style="left:510.25px;top:308px;width:1px;height:17px;background:#44454a"></div>
<div class="a" style="left:536.95px;top:308px;width:1px;height:17px;background:#44454a"></div>
<div class="a" style="left:430.15px;top:325px;width:1.3px;height:16px;background:#6d6e73"></div>
<div class="a" style="left:456.85px;top:325px;width:1px;height:16px;background:#44454a"></div>
<div class="a" style="left:483.55px;top:325px;width:1px;height:16px;background:#44454a"></div>
<div class="a" style="left:510.25px;top:325px;width:1px;height:16px;background:#44454a"></div>
<div class="a" style="left:430.15px;top:341px;width:1.3px;height:17px;background:#6d6e73"></div>
<div class="a" style="left:456.85px;top:341px;width:1px;height:17px;background:#44454a"></div>
<div class="a" style="left:483.55px;top:341px;width:1px;height:17px;background:#44454a"></div>
<div class="a" style="left:510.25px;top:341px;width:1px;height:17px;background:#44454a"></div>
<div class="a" style="left:430.15px;top:358px;width:1.3px;height:17px;background:#6d6e73"></div>
<div class="a" style="left:456.85px;top:358px;width:1px;height:17px;background:#44454a"></div>
<div class="a" style="left:483.55px;top:358px;width:1px;height:17px;background:#44454a"></div>
<div class="a" style="left:510.25px;top:358px;width:1px;height:17px;background:#44454a"></div>
<div class="a" style="left:536.95px;top:358px;width:1px;height:17px;background:#44454a"></div>
<div class="a" style="left:430.15px;top:375px;width:1.3px;height:17px;background:#6d6e73"></div>
<div class="a" style="left:456.85px;top:375px;width:1px;height:17px;background:#44454a"></div>
<div class="a" style="left:483.55px;top:375px;width:1px;height:17px;background:#44454a"></div>
<div class="a" style="left:510.25px;top:375px;width:1px;height:17px;background:#44454a"></div>
<div class="a" style="left:536.95px;top:375px;width:1px;height:17px;background:#44454a"></div>
<div class="a" style="left:430.15px;top:392px;width:1.3px;height:16px;background:#6d6e73"></div>
<div class="a" style="left:456.85px;top:392px;width:1px;height:16px;background:#44454a"></div>
<div class="a" style="left:483.55px;top:392px;width:1px;height:16px;background:#44454a"></div>
<div class="a" style="left:510.25px;top:392px;width:1px;height:16px;background:#44454a"></div>
<div class="a" style="left:536.95px;top:392px;width:1px;height:16px;background:#44454a"></div>
<div class="a" style="left:430.15px;top:408px;width:1.3px;height:17px;background:#6d6e73"></div>
<div class="a" style="left:456.85px;top:408px;width:1px;height:17px;background:#44454a"></div>
<div class="a" style="left:483.55px;top:408px;width:1px;height:17px;background:#44454a"></div>
<div class="a" style="left:510.25px;top:408px;width:1px;height:17px;background:#44454a"></div>
<div class="a" style="left:536.95px;top:408px;width:1px;height:17px;background:#44454a"></div>
<div class="a" style="left:430.15px;top:425px;width:1.3px;height:17px;background:#6d6e73"></div>
<div class="a" style="left:456.85px;top:425px;width:1px;height:17px;background:#44454a"></div>
<div class="a" style="left:483.55px;top:425px;width:1px;height:17px;background:#44454a"></div>
<div class="a" style="left:510.25px;top:425px;width:1px;height:17px;background:#44454a"></div>
<div class="a" style="left:536.95px;top:425px;width:1px;height:17px;background:#44454a"></div>
<div class="a" style="left:430.15px;top:442px;width:1.3px;height:16px;background:#6d6e73"></div>
<div class="a" style="left:456.85px;top:442px;width:1px;height:16px;background:#44454a"></div>
<div class="a" style="left:483.55px;top:442px;width:1px;height:16px;background:#44454a"></div>
<div class="a" style="left:510.25px;top:442px;width:1px;height:16px;background:#44454a"></div>
<div class="a" style="left:536.95px;top:442px;width:1px;height:16px;background:#44454a"></div>
<div class="a" style="left:430.15px;top:458px;width:1.3px;height:17px;background:#6d6e73"></div>
<div class="a" style="left:456.85px;top:458px;width:1px;height:17px;background:#44454a"></div>
<div class="a" style="left:483.55px;top:458px;width:1px;height:17px;background:#44454a"></div>
<div class="a" style="left:510.25px;top:458px;width:1px;height:17px;background:#44454a"></div>
<div class="a" style="left:536.95px;top:458px;width:1px;height:17px;background:#44454a"></div>
<div class="a" style="left:430.15px;top:475px;width:1.3px;height:17px;background:#6d6e73"></div>
<div class="a" style="left:456.85px;top:475px;width:1px;height:17px;background:#44454a"></div>
<div class="a" style="left:483.55px;top:475px;width:1px;height:17px;background:#44454a"></div>
<div class="a" style="left:510.25px;top:475px;width:1px;height:17px;background:#44454a"></div>
<div class="a" style="left:536.95px;top:475px;width:1px;height:17px;background:#44454a"></div>
<div class="a" style="left:430.15px;top:492px;width:1.3px;height:16px;background:#6d6e73"></div>
<div class="a" style="left:456.85px;top:492px;width:1px;height:16px;background:#44454a"></div>
<div class="a" style="left:483.55px;top:492px;width:1px;height:16px;background:#44454a"></div>
<div class="a" style="left:510.25px;top:492px;width:1px;height:16px;background:#44454a"></div>
<div class="a" style="left:536.95px;top:492px;width:1px;height:16px;background:#44454a"></div>
<div class="a" style="left:430.15px;top:508px;width:1.3px;height:17px;background:#6d6e73"></div>
<div class="a" style="left:456.85px;top:508px;width:1px;height:17px;background:#44454a"></div>
<div class="a" style="left:483.55px;top:508px;width:1px;height:17px;background:#44454a"></div>
<div class="a" style="left:510.25px;top:508px;width:1px;height:17px;background:#44454a"></div>
<div class="a" style="left:536.95px;top:508px;width:1px;height:17px;background:#44454a"></div>
<div class="a" style="left:430.15px;top:525px;width:1.3px;height:17px;background:#6d6e73"></div>
<div class="a" style="left:456.85px;top:525px;width:1px;height:17px;background:#44454a"></div>
<div class="a" style="left:483.55px;top:525px;width:1px;height:17px;background:#44454a"></div>
<div class="a" style="left:510.25px;top:525px;width:1px;height:17px;background:#44454a"></div>
<div class="a" style="left:536.95px;top:525px;width:1px;height:17px;background:#44454a"></div>
<div class="a" style="left:430.15px;top:542px;width:1.3px;height:16px;background:#6d6e73"></div>
<div class="a" style="left:456.85px;top:542px;width:1px;height:16px;background:#44454a"></div>
<div class="a" style="left:483.55px;top:542px;width:1px;height:16px;background:#44454a"></div>
<div class="a" style="left:510.25px;top:542px;width:1px;height:16px;background:#44454a"></div>
<div class="a" style="left:430.15px;top:558px;width:1.3px;height:17px;background:#6d6e73"></div>
<div class="a" style="left:456.85px;top:558px;width:1px;height:17px;background:#44454a"></div>
<div class="a" style="left:483.55px;top:558px;width:1px;height:17px;background:#44454a"></div>
<div class="a" style="left:430.15px;top:575px;width:1.3px;height:17px;background:#6d6e73"></div>
<div class="a" style="left:456.85px;top:575px;width:1px;height:17px;background:#44454a"></div>
<div class="a" style="left:430.15px;top:592px;width:1.3px;height:17px;background:#6d6e73"></div>
<div class="a" style="left:456.85px;top:592px;width:1px;height:17px;background:#44454a"></div>
<div class="a" style="left:430.15px;top:609px;width:1.3px;height:16px;background:#6d6e73"></div>
<div class="a" style="left:456.85px;top:609px;width:1px;height:16px;background:#44454a"></div>
<div class="a" style="left:430.15px;top:625px;width:1.3px;height:17px;background:#6d6e73"></div>
<div class="a" style="left:403.45px;top:659px;width:1px;height:16px;background:#3e3f47"></div>
<div class="a" style="left:403.45px;top:675px;width:1px;height:17px;background:#3e3f47"></div>
<div class="a" style="left:430.15px;top:675px;width:1px;height:17px;background:#3e3f47"></div>
<div class="a" style="left:403.45px;top:692px;width:1px;height:17px;background:#3e3f47"></div>
<div class="a" style="left:430.15px;top:692px;width:1px;height:17px;background:#3e3f47"></div>
<div class="a" style="left:456.85px;top:692px;width:1px;height:17px;background:#3e3f47"></div>
<div class="a" style="left:403.45px;top:709px;width:1px;height:16px;background:#3e3f47"></div>
<div class="a" style="left:430.15px;top:709px;width:1px;height:16px;background:#3e3f47"></div>
<div class="a" style="left:456.85px;top:709px;width:1px;height:16px;background:#3e3f47"></div>
<div class="a" style="left:483.55px;top:709px;width:1px;height:16px;background:#3e3f47"></div>
<div class="a" style="left:403.45px;top:725px;width:1px;height:17px;background:#3e3f47"></div>
<div class="a" style="left:430.15px;top:725px;width:1px;height:17px;background:#3e3f47"></div>
<div class="a" style="left:456.85px;top:725px;width:1px;height:17px;background:#3e3f47"></div>
<div class="a" style="left:483.55px;top:725px;width:1px;height:17px;background:#3e3f47"></div>
<div class="a" style="left:510.25px;top:725px;width:1px;height:17px;background:#3e3f47"></div>
<div class="code ln" style="left:329px;width:49.6px;text-align:right;top:25.36px;color:#858585;-webkit-text-stroke:0.3px currentColor">4</div>
<div class="code ln" style="left:329px;width:49.6px;text-align:right;top:42.05px;color:#858585;-webkit-text-stroke:0.3px currentColor">5</div>
<div class="code ln" style="left:329px;width:49.6px;text-align:right;top:58.75px;color:#c6c6c6;-webkit-text-stroke:0.3px currentColor">6</div>
<div class="code ln" style="left:329px;width:49.6px;text-align:right;top:75.44px;color:#858585;-webkit-text-stroke:0.3px currentColor">7</div>
<div class="code ln" style="left:329px;width:49.6px;text-align:right;top:92.13px;color:#858585;-webkit-text-stroke:0.3px currentColor">8</div>
<div class="code ln" style="left:329px;width:49.6px;text-align:right;top:108.83px;color:#858585;-webkit-text-stroke:0.3px currentColor">9</div>
<div class="code ln" style="left:329px;width:49.6px;text-align:right;top:125.52px;color:#858585;-webkit-text-stroke:0.3px currentColor">10</div>
<div class="code ln" style="left:329px;width:49.6px;text-align:right;top:142.22px;color:#858585;-webkit-text-stroke:0.3px currentColor">11</div>
<div class="code ln" style="left:329px;width:49.6px;text-align:right;top:158.91px;color:#858585;-webkit-text-stroke:0.3px currentColor">12</div>
<div class="code ln" style="left:329px;width:49.6px;text-align:right;top:175.61px;color:#858585;-webkit-text-stroke:0.3px currentColor">13</div>
<div class="code ln" style="left:329px;width:49.6px;text-align:right;top:192.30px;color:#858585;-webkit-text-stroke:0.3px currentColor">14</div>
<div class="code ln" style="left:329px;width:49.6px;text-align:right;top:209.00px;color:#858585;-webkit-text-stroke:0.3px currentColor">15</div>
<div class="code ln" style="left:329px;width:49.6px;text-align:right;top:225.70px;color:#858585;-webkit-text-stroke:0.3px currentColor">16</div>
<div class="code ln" style="left:329px;width:49.6px;text-align:right;top:242.39px;color:#858585;-webkit-text-stroke:0.3px currentColor">17</div>
<div class="code ln" style="left:329px;width:49.6px;text-align:right;top:259.09px;color:#858585;-webkit-text-stroke:0.3px currentColor">18</div>
<div class="code ln" style="left:329px;width:49.6px;text-align:right;top:275.78px;color:#858585;-webkit-text-stroke:0.3px currentColor">19</div>
<div class="code ln" style="left:329px;width:49.6px;text-align:right;top:292.48px;color:#858585;-webkit-text-stroke:0.3px currentColor">20</div>
<div class="code ln" style="left:329px;width:49.6px;text-align:right;top:309.17px;color:#858585;-webkit-text-stroke:0.3px currentColor">21</div>
<div class="code ln" style="left:329px;width:49.6px;text-align:right;top:325.87px;color:#858585;-webkit-text-stroke:0.3px currentColor">22</div>
<div class="code ln" style="left:329px;width:49.6px;text-align:right;top:342.56px;color:#858585;-webkit-text-stroke:0.3px currentColor">23</div>
<div class="code ln" style="left:329px;width:49.6px;text-align:right;top:359.25px;color:#858585;-webkit-text-stroke:0.3px currentColor">24</div>
<div class="code ln" style="left:329px;width:49.6px;text-align:right;top:375.95px;color:#858585;-webkit-text-stroke:0.3px currentColor">25</div>
<div class="code ln" style="left:329px;width:49.6px;text-align:right;top:392.65px;color:#858585;-webkit-text-stroke:0.3px currentColor">26</div>
<div class="code ln" style="left:329px;width:49.6px;text-align:right;top:409.34px;color:#858585;-webkit-text-stroke:0.3px currentColor">27</div>
<div class="code ln" style="left:329px;width:49.6px;text-align:right;top:426.04px;color:#858585;-webkit-text-stroke:0.3px currentColor">28</div>
<div class="code ln" style="left:329px;width:49.6px;text-align:right;top:442.73px;color:#858585;-webkit-text-stroke:0.3px currentColor">29</div>
<div class="code ln" style="left:329px;width:49.6px;text-align:right;top:459.43px;color:#858585;-webkit-text-stroke:0.3px currentColor">30</div>
<div class="code ln" style="left:329px;width:49.6px;text-align:right;top:476.12px;color:#858585;-webkit-text-stroke:0.3px currentColor">31</div>
<div class="code ln" style="left:329px;width:49.6px;text-align:right;top:492.81px;color:#858585;-webkit-text-stroke:0.3px currentColor">32</div>
<div class="code ln" style="left:329px;width:49.6px;text-align:right;top:509.51px;color:#858585;-webkit-text-stroke:0.3px currentColor">33</div>
<div class="code ln" style="left:329px;width:49.6px;text-align:right;top:526.21px;color:#858585;-webkit-text-stroke:0.3px currentColor">34</div>
<div class="code ln" style="left:329px;width:49.6px;text-align:right;top:542.90px;color:#858585;-webkit-text-stroke:0.3px currentColor">35</div>
<div class="code ln" style="left:329px;width:49.6px;text-align:right;top:559.60px;color:#858585;-webkit-text-stroke:0.3px currentColor">36</div>
<div class="code ln" style="left:329px;width:49.6px;text-align:right;top:576.29px;color:#858585;-webkit-text-stroke:0.3px currentColor">37</div>
<div class="code ln" style="left:329px;width:49.6px;text-align:right;top:592.99px;color:#858585;-webkit-text-stroke:0.3px currentColor">38</div>
<div class="code ln" style="left:329px;width:49.6px;text-align:right;top:609.68px;color:#858585;-webkit-text-stroke:0.3px currentColor">39</div>
<div class="code ln" style="left:329px;width:49.6px;text-align:right;top:626.38px;color:#858585;-webkit-text-stroke:0.3px currentColor">40</div>
<div class="code ln" style="left:329px;width:49.6px;text-align:right;top:643.07px;color:#858585;-webkit-text-stroke:0.3px currentColor">41</div>
<div class="code ln" style="left:329px;width:49.6px;text-align:right;top:659.77px;color:#858585;-webkit-text-stroke:0.3px currentColor">42</div>
<div class="code ln" style="left:329px;width:49.6px;text-align:right;top:676.46px;color:#858585;-webkit-text-stroke:0.3px currentColor">43</div>
<div class="code ln" style="left:329px;width:49.6px;text-align:right;top:693.16px;color:#858585;-webkit-text-stroke:0.3px currentColor">44</div>
<div class="code ln" style="left:329px;width:49.6px;text-align:right;top:709.85px;color:#858585;-webkit-text-stroke:0.3px currentColor">45</div>
<div class="code ln" style="left:329px;width:49.6px;text-align:right;top:726.55px;color:#858585;-webkit-text-stroke:0.3px currentColor">46</div>
<div class="code" style="left:402.80px;top:8.66px">    <span class="k">&quot;id&quot;</span><span class="p">:</span> <span class="s">&quot;a69b43f277ba20fcac141151250ca755&quot;</span><span class="p">,</span></div>
<div class="code" style="left:402.80px;top:25.36px">    <span class="k">&quot;solcVersion&quot;</span><span class="p">:</span> <span class="s">&quot;0.8.19&quot;</span><span class="p">,</span></div>
<div class="code" style="left:402.80px;top:42.05px">    <span class="k">&quot;solcLongVersion&quot;</span><span class="p">:</span> <span class="s">&quot;0.8.19+commit.7dd6d404&quot;</span><span class="p">,</span></div>
<div class="code" style="left:402.80px;top:58.75px">    <span class="k">&quot;input&quot;</span><span class="p">:</span> <span class="b1">{</span></div>
<div class="arrow" style="left:404.40px;top:80.69px"></div>
<div class="arrow" style="left:431.10px;top:80.69px"></div>
<div class="code" style="left:402.80px;top:75.44px"><span class="ws tab">    </span><span class="ws tab">    </span><span class="k">&quot;language&quot;</span><span class="p">:</span><span class="ws">·</span><span class="s">&quot;Solidity&quot;</span><span class="p">,</span></div>
<div class="arrow" style="left:404.40px;top:97.38px"></div>
<div class="arrow" style="left:431.10px;top:97.38px"></div>
<div class="code" style="left:402.80px;top:92.13px"><span class="ws tab">    </span><span class="ws tab">    </span><span class="k">&quot;sources&quot;</span><span class="p">:</span><span class="ws">·</span><span class="b2">{</span></div>
<div class="arrow" style="left:404.40px;top:114.08px"></div>
<div class="arrow" style="left:431.10px;top:114.08px"></div>
<div class="arrow" style="left:457.80px;top:114.08px"></div>
<div class="code" style="left:402.80px;top:108.83px"><span class="ws tab">    </span><span class="ws tab">    </span><span class="ws tab">    </span><span class="k">&quot;contracts/Storage.sol&quot;</span><span class="p">:</span><span class="ws">·</span><span class="b0">{</span></div>
<div class="arrow" style="left:404.40px;top:130.77px"></div>
<div class="arrow" style="left:431.10px;top:130.77px"></div>
<div class="arrow" style="left:457.80px;top:130.77px"></div>
<div class="arrow" style="left:484.50px;top:130.77px"></div>
<div class="code" style="left:402.80px;top:125.52px"><span class="ws tab">    </span><span class="ws tab">    </span><span class="ws tab">    </span><span class="ws tab">    </span><span class="k">&quot;content&quot;</span><span class="p">:</span><span class="ws">·</span><span class="s">&quot;//<span class="ws">·</span>SPDX-License-Identifier:<span class="ws">·</span>GPL-3.0\n\npragma<span class="ws">·</span>solidity<span class="ws">·</span>&gt;=0.8.2<span class="ws">·</span>&lt;0.9.0;\n\n/**\n<span class="ws">·</span>*<span class="ws">·</span>@title<span class="ws">·</span>Storage\n<span class="ws">·</span>*<span class="ws">·</span>@dev<span class="ws">·</span>Store<span class="ws">·</span>&amp;<span class="ws">·</span>retrieve<span class="ws">·</span>value<span class="ws">·</span>in<span class="ws">·</span>a<span class="ws">·</span>variable\n<span class="ws">·</span>*<span class="ws">·</span>@custom:dev-run-script<span class="ws">·</span>./scripts/deploy_with_ethers.ts\n<span class="ws">·</span>*/\ncontract<span class="ws">·</span>Storage<span class="ws">·</span>{&quot;</span></div>
<div class="arrow" style="left:404.40px;top:147.47px"></div>
<div class="arrow" style="left:431.10px;top:147.47px"></div>
<div class="arrow" style="left:457.80px;top:147.47px"></div>
<div class="code" style="left:402.80px;top:142.22px"><span class="ws tab">    </span><span class="ws tab">    </span><span class="ws tab">    </span><span class="b0">}</span></div>
<div class="arrow" style="left:404.40px;top:164.16px"></div>
<div class="arrow" style="left:431.10px;top:164.16px"></div>
<div class="code" style="left:402.80px;top:158.91px"><span class="ws tab">    </span><span class="ws tab">    </span><span class="b2">}</span><span class="p">,</span></div>
<div class="arrow" style="left:404.40px;top:180.86px"></div>
<div class="arrow" style="left:431.10px;top:180.86px"></div>
<div class="code" style="left:402.80px;top:175.61px"><span class="ws tab">    </span><span class="ws tab">    </span><span class="k">&quot;settings&quot;</span><span class="p">:</span><span class="ws">·</span><span class="b2">{</span></div>
<div class="arrow" style="left:404.40px;top:197.55px"></div>
<div class="arrow" style="left:431.10px;top:197.55px"></div>
<div class="arrow" style="left:457.80px;top:197.55px"></div>
<div class="code" style="left:402.80px;top:192.30px"><span class="ws tab">    </span><span class="ws tab">    </span><span class="ws tab">    </span><span class="k">&quot;optimizer&quot;</span><span class="p">:</span><span class="ws">·</span><span class="b0">{</span></div>
<div class="arrow" style="left:404.40px;top:214.25px"></div>
<div class="arrow" style="left:431.10px;top:214.25px"></div>
<div class="arrow" style="left:457.80px;top:214.25px"></div>
<div class="arrow" style="left:484.50px;top:214.25px"></div>
<div class="code" style="left:402.80px;top:209.00px"><span class="ws tab">    </span><span class="ws tab">    </span><span class="ws tab">    </span><span class="ws tab">    </span><span class="k">&quot;enabled&quot;</span><span class="p">:</span><span class="ws">·</span><span class="f">false</span><span class="p">,</span></div>
<div class="arrow" style="left:404.40px;top:230.94px"></div>
<div class="arrow" style="left:431.10px;top:230.94px"></div>
<div class="arrow" style="left:457.80px;top:230.94px"></div>
<div class="arrow" style="left:484.50px;top:230.94px"></div>
<div class="code" style="left:402.80px;top:225.70px"><span class="ws tab">    </span><span class="ws tab">    </span><span class="ws tab">    </span><span class="ws tab">    </span><span class="k">&quot;runs&quot;</span><span class="p">:</span><span class="ws">·</span><span class="n">200</span></div>
<div class="arrow" style="left:404.40px;top:247.64px"></div>
<div class="arrow" style="left:431.10px;top:247.64px"></div>
<div class="arrow" style="left:457.80px;top:247.64px"></div>
<div class="code" style="left:402.80px;top:242.39px"><span class="ws tab">    </span><span class="ws tab">    </span><span class="ws tab">    </span><span class="b0">}</span><span class="p">,</span></div>
<div class="arrow" style="left:404.40px;top:264.33px"></div>
<div class="arrow" style="left:431.10px;top:264.33px"></div>
<div class="arrow" style="left:457.80px;top:264.33px"></div>
<div class="code" style="left:402.80px;top:259.09px"><span class="ws tab">    </span><span class="ws tab">    </span><span class="ws tab">    </span><span class="k">&quot;outputSelection&quot;</span><span class="p">:</span><span class="ws">·</span><span class="b0">{</span></div>
<div class="arrow" style="left:404.40px;top:281.03px"></div>
<div class="arrow" style="left:431.10px;top:281.03px"></div>
<div class="arrow" style="left:457.80px;top:281.03px"></div>
<div class="arrow" style="left:484.50px;top:281.03px"></div>
<div class="code" style="left:402.80px;top:275.78px"><span class="ws tab">    </span><span class="ws tab">    </span><span class="ws tab">    </span><span class="ws tab">    </span><span class="k">&quot;*&quot;</span><span class="p">:</span><span class="ws">·</span><span class="b1">{</span></div>
<div class="arrow" style="left:404.40px;top:297.72px"></div>
<div class="arrow" style="left:431.10px;top:297.72px"></div>
<div class="arrow" style="left:457.80px;top:297.72px"></div>
<div class="arrow" style="left:484.50px;top:297.72px"></div>
<div class="arrow" style="left:511.20px;top:297.72px"></div>
<div class="code" style="left:402.80px;top:292.48px"><span class="ws tab">    </span><span class="ws tab">    </span><span class="ws tab">    </span><span class="ws tab">    </span><span class="ws tab">    </span><span class="k">&quot;&quot;</span><span class="p">:</span><span class="ws">·</span><span class="b2">[</span></div>
<div class="arrow" style="left:404.40px;top:314.42px"></div>
<div class="arrow" style="left:431.10px;top:314.42px"></div>
<div class="arrow" style="left:457.80px;top:314.42px"></div>
<div class="arrow" style="left:484.50px;top:314.42px"></div>
<div class="arrow" style="left:511.20px;top:314.42px"></div>
<div class="arrow" style="left:537.90px;top:314.42px"></div>
<div class="code" style="left:402.80px;top:309.17px"><span class="ws tab">    </span><span class="ws tab">    </span><span class="ws tab">    </span><span class="ws tab">    </span><span class="ws tab">    </span><span class="ws tab">    </span><span class="s">&quot;ast&quot;</span></div>
<div class="arrow" style="left:404.40px;top:331.11px"></div>
<div class="arrow" style="left:431.10px;top:331.11px"></div>
<div class="arrow" style="left:457.80px;top:331.11px"></div>
<div class="arrow" style="left:484.50px;top:331.11px"></div>
<div class="arrow" style="left:511.20px;top:331.11px"></div>
<div class="code" style="left:402.80px;top:325.87px"><span class="ws tab">    </span><span class="ws tab">    </span><span class="ws tab">    </span><span class="ws tab">    </span><span class="ws tab">    </span><span class="b2">]</span><span class="p">,</span></div>
<div class="arrow" style="left:404.40px;top:347.81px"></div>
<div class="arrow" style="left:431.10px;top:347.81px"></div>
<div class="arrow" style="left:457.80px;top:347.81px"></div>
<div class="arrow" style="left:484.50px;top:347.81px"></div>
<div class="arrow" style="left:511.20px;top:347.81px"></div>
<div class="code" style="left:402.80px;top:342.56px"><span class="ws tab">    </span><span class="ws tab">    </span><span class="ws tab">    </span><span class="ws tab">    </span><span class="ws tab">    </span><span class="k">&quot;*&quot;</span><span class="p">:</span><span class="ws">·</span><span class="b2">[</span></div>
<div class="arrow" style="left:404.40px;top:364.50px"></div>
<div class="arrow" style="left:431.10px;top:364.50px"></div>
<div class="arrow" style="left:457.80px;top:364.50px"></div>
<div class="arrow" style="left:484.50px;top:364.50px"></div>
<div class="arrow" style="left:511.20px;top:364.50px"></div>
<div class="arrow" style="left:537.90px;top:364.50px"></div>
<div class="code" style="left:402.80px;top:359.25px"><span class="ws tab">    </span><span class="ws tab">    </span><span class="ws tab">    </span><span class="ws tab">    </span><span class="ws tab">    </span><span class="ws tab">    </span><span class="s">&quot;abi&quot;</span><span class="p">,</span></div>
<div class="arrow" style="left:404.40px;top:381.20px"></div>
<div class="arrow" style="left:431.10px;top:381.20px"></div>
<div class="arrow" style="left:457.80px;top:381.20px"></div>
<div class="arrow" style="left:484.50px;top:381.20px"></div>
<div class="arrow" style="left:511.20px;top:381.20px"></div>
<div class="arrow" style="left:537.90px;top:381.20px"></div>
<div class="code" style="left:402.80px;top:375.95px"><span class="ws tab">    </span><span class="ws tab">    </span><span class="ws tab">    </span><span class="ws tab">    </span><span class="ws tab">    </span><span class="ws tab">    </span><span class="s">&quot;metadata&quot;</span><span class="p">,</span></div>
<div class="arrow" style="left:404.40px;top:397.89px"></div>
<div class="arrow" style="left:431.10px;top:397.89px"></div>
<div class="arrow" style="left:457.80px;top:397.89px"></div>
<div class="arrow" style="left:484.50px;top:397.89px"></div>
<div class="arrow" style="left:511.20px;top:397.89px"></div>
<div class="arrow" style="left:537.90px;top:397.89px"></div>
<div class="code" style="left:402.80px;top:392.65px"><span class="ws tab">    </span><span class="ws tab">    </span><span class="ws tab">    </span><span class="ws tab">    </span><span class="ws tab">    </span><span class="ws tab">    </span><span class="s">&quot;devdoc&quot;</span><span class="p">,</span></div>
<div class="arrow" style="left:404.40px;top:414.59px"></div>
<div class="arrow" style="left:431.10px;top:414.59px"></div>
<div class="arrow" style="left:457.80px;top:414.59px"></div>
<div class="arrow" style="left:484.50px;top:414.59px"></div>
<div class="arrow" style="left:511.20px;top:414.59px"></div>
<div class="arrow" style="left:537.90px;top:414.59px"></div>
<div class="code" style="left:402.80px;top:409.34px"><span class="ws tab">    </span><span class="ws tab">    </span><span class="ws tab">    </span><span class="ws tab">    </span><span class="ws tab">    </span><span class="ws tab">    </span><span class="s">&quot;userdoc&quot;</span><span class="p">,</span></div>
<div class="arrow" style="left:404.40px;top:431.28px"></div>
<div class="arrow" style="left:431.10px;top:431.28px"></div>
<div class="arrow" style="left:457.80px;top:431.28px"></div>
<div class="arrow" style="left:484.50px;top:431.28px"></div>
<div class="arrow" style="left:511.20px;top:431.28px"></div>
<div class="arrow" style="left:537.90px;top:431.28px"></div>
<div class="code" style="left:402.80px;top:426.04px"><span class="ws tab">    </span><span class="ws tab">    </span><span class="ws tab">    </span><span class="ws tab">    </span><span class="ws tab">    </span><span class="ws tab">    </span><span class="s">&quot;storageLayout&quot;</span><span class="p">,</span></div>
<div class="arrow" style="left:404.40px;top:447.98px"></div>
<div class="arrow" style="left:431.10px;top:447.98px"></div>
<div class="arrow" style="left:457.80px;top:447.98px"></div>
<div class="arrow" style="left:484.50px;top:447.98px"></div>
<div class="arrow" style="left:511.20px;top:447.98px"></div>
<div class="arrow" style="left:537.90px;top:447.98px"></div>
<div class="code" style="left:402.80px;top:442.73px"><span class="ws tab">    </span><span class="ws tab">    </span><span class="ws tab">    </span><span class="ws tab">    </span><span class="ws tab">    </span><span class="ws tab">    </span><span class="s">&quot;evm.legacyAssembly&quot;</span><span class="p">,</span></div>
<div class="arrow" style="left:404.40px;top:464.67px"></div>
<div class="arrow" style="left:431.10px;top:464.67px"></div>
<div class="arrow" style="left:457.80px;top:464.67px"></div>
<div class="arrow" style="left:484.50px;top:464.67px"></div>
<div class="arrow" style="left:511.20px;top:464.67px"></div>
<div class="arrow" style="left:537.90px;top:464.67px"></div>
<div class="code" style="left:402.80px;top:459.43px"><span class="ws tab">    </span><span class="ws tab">    </span><span class="ws tab">    </span><span class="ws tab">    </span><span class="ws tab">    </span><span class="ws tab">    </span><span class="s">&quot;evm.bytecode&quot;</span><span class="p">,</span></div>
<div class="arrow" style="left:404.40px;top:481.37px"></div>
<div class="arrow" style="left:431.10px;top:481.37px"></div>
<div class="arrow" style="left:457.80px;top:481.37px"></div>
<div class="arrow" style="left:484.50px;top:481.37px"></div>
<div class="arrow" style="left:511.20px;top:481.37px"></div>
<div class="arrow" style="left:537.90px;top:481.37px"></div>
<div class="code" style="left:402.80px;top:476.12px"><span class="ws tab">    </span><span class="ws tab">    </span><span class="ws tab">    </span><span class="ws tab">    </span><span class="ws tab">    </span><span class="ws tab">    </span><span class="s">&quot;evm.deployedBytecode&quot;</span><span class="p">,</span></div>
<div class="arrow" style="left:404.40px;top:498.06px"></div>
<div class="arrow" style="left:431.10px;top:498.06px"></div>
<div class="arrow" style="left:457.80px;top:498.06px"></div>
<div class="arrow" style="left:484.50px;top:498.06px"></div>
<div class="arrow" style="left:511.20px;top:498.06px"></div>
<div class="arrow" style="left:537.90px;top:498.06px"></div>
<div class="code" style="left:402.80px;top:492.81px"><span class="ws tab">    </span><span class="ws tab">    </span><span class="ws tab">    </span><span class="ws tab">    </span><span class="ws tab">    </span><span class="ws tab">    </span><span class="s">&quot;evm.methodIdentifiers&quot;</span><span class="p">,</span></div>
<div class="arrow" style="left:404.40px;top:514.76px"></div>
<div class="arrow" style="left:431.10px;top:514.76px"></div>
<div class="arrow" style="left:457.80px;top:514.76px"></div>
<div class="arrow" style="left:484.50px;top:514.76px"></div>
<div class="arrow" style="left:511.20px;top:514.76px"></div>
<div class="arrow" style="left:537.90px;top:514.76px"></div>
<div class="code" style="left:402.80px;top:509.51px"><span class="ws tab">    </span><span class="ws tab">    </span><span class="ws tab">    </span><span class="ws tab">    </span><span class="ws tab">    </span><span class="ws tab">    </span><span class="s">&quot;evm.gasEstimates&quot;</span><span class="p">,</span></div>
<div class="arrow" style="left:404.40px;top:531.45px"></div>
<div class="arrow" style="left:431.10px;top:531.45px"></div>
<div class="arrow" style="left:457.80px;top:531.45px"></div>
<div class="arrow" style="left:484.50px;top:531.45px"></div>
<div class="arrow" style="left:511.20px;top:531.45px"></div>
<div class="arrow" style="left:537.90px;top:531.45px"></div>
<div class="code" style="left:402.80px;top:526.21px"><span class="ws tab">    </span><span class="ws tab">    </span><span class="ws tab">    </span><span class="ws tab">    </span><span class="ws tab">    </span><span class="ws tab">    </span><span class="s">&quot;evm.assembly&quot;</span></div>
<div class="arrow" style="left:404.40px;top:548.15px"></div>
<div class="arrow" style="left:431.10px;top:548.15px"></div>
<div class="arrow" style="left:457.80px;top:548.15px"></div>
<div class="arrow" style="left:484.50px;top:548.15px"></div>
<div class="arrow" style="left:511.20px;top:548.15px"></div>
<div class="code" style="left:402.80px;top:542.90px"><span class="ws tab">    </span><span class="ws tab">    </span><span class="ws tab">    </span><span class="ws tab">    </span><span class="ws tab">    </span><span class="b2">]</span></div>
<div class="arrow" style="left:404.40px;top:564.84px"></div>
<div class="arrow" style="left:431.10px;top:564.84px"></div>
<div class="arrow" style="left:457.80px;top:564.84px"></div>
<div class="arrow" style="left:484.50px;top:564.84px"></div>
<div class="code" style="left:402.80px;top:559.60px"><span class="ws tab">    </span><span class="ws tab">    </span><span class="ws tab">    </span><span class="ws tab">    </span><span class="b1">}</span></div>
<div class="arrow" style="left:404.40px;top:581.54px"></div>
<div class="arrow" style="left:431.10px;top:581.54px"></div>
<div class="arrow" style="left:457.80px;top:581.54px"></div>
<div class="code" style="left:402.80px;top:576.29px"><span class="ws tab">    </span><span class="ws tab">    </span><span class="ws tab">    </span><span class="b0">}</span><span class="p">,</span></div>
<div class="arrow" style="left:404.40px;top:598.23px"></div>
<div class="arrow" style="left:431.10px;top:598.23px"></div>
<div class="arrow" style="left:457.80px;top:598.23px"></div>
<div class="code" style="left:402.80px;top:592.99px"><span class="ws tab">    </span><span class="ws tab">    </span><span class="ws tab">    </span><span class="k">&quot;remappings&quot;</span><span class="p">:</span><span class="ws">·</span><span class="b0">[</span><span class="b0">]</span><span class="p">,</span></div>
<div class="arrow" style="left:404.40px;top:614.93px"></div>
<div class="arrow" style="left:431.10px;top:614.93px"></div>
<div class="arrow" style="left:457.80px;top:614.93px"></div>
<div class="code" style="left:402.80px;top:609.68px"><span class="ws tab">    </span><span class="ws tab">    </span><span class="ws tab">    </span><span class="k">&quot;evmVersion&quot;</span><span class="p">:</span><span class="ws">·</span><span class="s">&quot;paris&quot;</span></div>
<div class="arrow" style="left:404.40px;top:631.62px"></div>
<div class="arrow" style="left:431.10px;top:631.62px"></div>
<div class="code" style="left:402.80px;top:626.38px"><span class="ws tab">    </span><span class="ws tab">    </span><span class="b2">}</span></div>
<div class="arrow" style="left:404.40px;top:648.32px"></div>
<div class="code" style="left:402.80px;top:643.07px"><span class="ws tab">    </span><span class="b1">}</span><span class="p">,</span></div>
<div class="code" style="left:402.80px;top:659.77px">    <span class="k">&quot;output&quot;</span><span class="p">:</span> <span class="b1">{</span></div>
<div class="code" style="left:402.80px;top:676.46px">        <span class="k">&quot;contracts&quot;</span><span class="p">:</span> <span class="b2">{</span></div>
<div class="code" style="left:402.80px;top:693.16px">            <span class="k">&quot;contracts/Storage.sol&quot;</span><span class="p">:</span> <span class="b0">{</span></div>
<div class="code" style="left:402.80px;top:709.85px">                <span class="k">&quot;Storage&quot;</span><span class="p">:</span> <span class="b1">{</span></div>
<div class="code" style="left:402.80px;top:726.55px">                    <span class="k">&quot;abi&quot;</span><span class="p">:</span> <span class="b2">[</span></div></div>
<div class="a" style="left:1471px;top:35px;width:7px;height:687px;background:linear-gradient(to right, rgba(10,10,20,0) 0%, rgba(10,10,20,0.45) 85%, rgba(10,10,20,0.2) 100%)"></div>
<div class="a" style="left:1478px;top:35px;width:111.0px;height:687px;background:#2b2d40"></div>
<div class="a" style="left:1481.0px;top:40.38px;width:108.0px;height:64.62px;background:#2a3f5e"></div>
<svg class="a" style="left:0;top:0" width="1600" height="908" viewBox="0 0 1600 908"><path fill="#7fb6d6" opacity="0.7" d="M1486.1 35.45h3.6v0.85h-3.6zM1486.1 37.25h11.7v0.85h-11.7zM1486.1 39.04h15.3v0.85h-15.3zM1486.1 105.45h7.2v0.85h-7.2zM1489.7 107.25h9.9v0.85h-9.9zM1493.3 109.05h20.7v0.85h-20.7zM1496.9 110.84h8.1v0.85h-8.1zM1500.5 112.64h4.5v0.85h-4.5zM1507.7 116.22h7.2v0.85h-7.2zM1507.7 118.02h5.4v0.85h-5.4zM1507.7 119.81h8.1v0.85h-8.1zM1514.9 123.41h12.6v0.85h-12.6zM1514.9 125.20h5.4v0.85h-5.4zM1514.9 127.00h5.4v0.85h-5.4zM1507.7 132.38h15.3v0.85h-15.3zM1507.7 134.17h5.4v0.85h-5.4zM1507.7 139.56h7.2v0.85h-7.2zM1514.9 143.15h12.6v0.85h-12.6zM1514.9 144.94h5.4v0.85h-5.4zM1514.9 146.74h5.4v0.85h-5.4zM1507.7 152.12h5.4v0.85h-5.4zM1507.7 153.92h8.1v0.85h-8.1zM1507.7 155.71h15.3v0.85h-15.3zM1507.7 157.51h5.4v0.85h-5.4zM1500.5 162.89h7.2v0.85h-7.2zM1504.1 164.69h20.7v0.85h-20.7zM1504.1 166.48h8.1v0.85h-8.1zM1504.1 168.28h5.4v0.85h-5.4zM1504.1 170.07h8.1v0.85h-8.1zM1507.7 171.87h10.8v0.85h-10.8zM1511.3 173.66h8.1v0.85h-8.1zM1511.3 175.46h8.1v0.85h-8.1zM1514.9 177.25h3.6v0.85h-3.6zM1507.7 182.64h14.4v0.85h-14.4zM1511.3 184.43h8.1v0.85h-8.1zM1511.3 186.23h7.2v0.85h-7.2zM1514.9 188.02h4.5v0.85h-4.5zM1504.1 195.20h6.3v0.85h-6.3zM1504.1 197.00h8.1v0.85h-8.1zM1500.5 200.59h4.5v0.85h-4.5zM1504.1 202.38h9.0v0.85h-9.0zM1504.1 204.18h9.0v0.85h-9.0zM1507.7 205.97h17.1v0.85h-17.1zM1507.7 207.77h16.2v0.85h-16.2zM1507.7 209.56h14.4v0.85h-14.4zM1507.7 211.36h7.2v0.85h-7.2zM1507.7 213.15h8.1v0.85h-8.1zM1507.7 214.95h9.9v0.85h-9.9zM1504.1 218.54h16.2v0.85h-16.2zM1507.7 220.33h17.1v0.85h-17.1zM1511.3 222.13h12.6v0.85h-12.6zM1514.9 223.92h10.8v0.85h-10.8zM1514.9 225.72h3.6v0.85h-3.6zM1514.9 227.51h14.4v0.85h-14.4zM1514.9 229.31h11.7v0.85h-11.7zM1511.3 232.90h9.9v0.85h-9.9zM1514.9 234.69h10.8v0.85h-10.8zM1514.9 236.49h3.6v0.85h-3.6zM1514.9 238.28h14.4v0.85h-14.4zM1514.9 240.08h11.7v0.85h-11.7zM1511.3 243.67h19.8v0.85h-19.8zM1514.9 245.46h10.8v0.85h-10.8zM1514.9 247.26h3.6v0.85h-3.6zM1514.9 249.05h14.4v0.85h-14.4zM1514.9 250.85h11.7v0.85h-11.7zM1511.3 254.44h25.2v0.85h-25.2zM1514.9 256.24h10.8v0.85h-10.8zM1514.9 258.03h3.6v0.85h-3.6zM1514.9 259.82h14.4v0.85h-14.4zM1514.9 261.62h11.7v0.85h-11.7zM1511.3 265.21h40.5v0.85h-40.5zM1514.9 267.00h10.8v0.85h-10.8zM1514.9 268.80h3.6v0.85h-3.6zM1514.9 270.59h14.4v0.85h-14.4zM1514.9 272.39h11.7v0.85h-11.7zM1511.3 275.98h55.8v0.85h-55.8zM1514.9 277.77h10.8v0.85h-10.8zM1514.9 279.57h3.6v0.85h-3.6zM1514.9 281.36h14.4v0.85h-14.4zM1514.9 283.16h11.7v0.85h-11.7zM1511.3 286.75h18.0v0.85h-18.0zM1514.9 288.55h10.8v0.85h-10.8zM1514.9 290.34h3.6v0.85h-3.6zM1514.9 292.13h14.4v0.85h-14.4zM1514.9 293.93h11.7v0.85h-11.7zM1511.3 297.52h17.1v0.85h-17.1zM1514.9 299.31h10.8v0.85h-10.8zM1514.9 301.11h3.6v0.85h-3.6zM1514.9 302.90h14.4v0.85h-14.4zM1514.9 304.70h11.7v0.85h-11.7zM1511.3 308.29h71.1v0.85h-71.1zM1514.9 310.08h10.8v0.85h-10.8zM1514.9 311.88h3.6v0.85h-3.6zM1514.9 313.67h14.4v0.85h-14.4zM1514.9 315.47h11.7v0.85h-11.7zM1511.3 319.06h71.1v0.85h-71.1zM1514.9 320.85h10.8v0.85h-10.8zM1514.9 322.65h3.6v0.85h-3.6zM1514.9 324.44h14.4v0.85h-14.4zM1514.9 326.24h11.7v0.85h-11.7zM1511.3 329.83h25.2v0.85h-25.2zM1514.9 331.62h10.8v0.85h-10.8zM1514.9 333.42h3.6v0.85h-3.6zM1514.9 335.21h14.4v0.85h-14.4zM1514.9 337.01h11.7v0.85h-11.7zM1507.7 342.39h16.2v0.85h-16.2zM1514.9 345.98h4.5v0.85h-4.5zM1518.5 347.78h9.0v0.85h-9.0zM1518.5 349.57h4.5v0.85h-4.5zM1518.5 351.37h10.8v0.85h-10.8zM1525.7 354.96h5.4v0.85h-5.4zM1529.3 356.75h9.0v0.85h-9.0zM1529.3 358.55h4.5v0.85h-4.5zM1529.3 360.34h10.8v0.85h-10.8zM1536.5 363.94h9.0v0.85h-9.0zM1536.5 365.73h4.5v0.85h-4.5zM1536.5 367.52h6.3v0.85h-6.3zM1540.1 369.32h9.9v0.85h-9.9zM1547.3 372.91h5.4v0.85h-5.4zM1547.3 374.70h9.0v0.85h-9.0zM1547.3 376.50h4.5v0.85h-4.5zM1547.3 378.29h5.4v0.85h-5.4zM1547.3 380.09h6.3v0.85h-6.3zM1540.1 385.47h12.6v0.85h-12.6zM1543.7 387.27h5.4v0.85h-5.4zM1543.7 389.06h9.0v0.85h-9.0zM1543.7 390.86h4.5v0.85h-4.5zM1540.1 394.45h9.0v0.85h-9.0zM1540.1 396.24h4.5v0.85h-4.5zM1536.5 399.83h13.5v0.85h-13.5zM1543.7 403.42h5.4v0.85h-5.4zM1543.7 405.22h9.0v0.85h-9.0zM1543.7 407.01h4.5v0.85h-4.5zM1525.7 419.58h5.4v0.85h-5.4zM1529.3 421.38h9.0v0.85h-9.0zM1529.3 423.17h4.5v0.85h-4.5zM1529.3 424.96h10.8v0.85h-10.8zM1536.5 428.55h9.0v0.85h-9.0zM1536.5 430.35h4.5v0.85h-4.5zM1536.5 432.14h6.3v0.85h-6.3zM1540.1 433.94h9.9v0.85h-9.9zM1547.3 437.53h5.4v0.85h-5.4zM1547.3 439.32h9.0v0.85h-9.0zM1547.3 441.12h4.5v0.85h-4.5zM1547.3 442.91h5.4v0.85h-5.4zM1547.3 444.71h6.3v0.85h-6.3zM1540.1 450.09h12.6v0.85h-12.6zM1543.7 451.89h5.4v0.85h-5.4zM1543.7 453.68h9.0v0.85h-9.0zM1543.7 455.48h4.5v0.85h-4.5zM1540.1 459.07h9.0v0.85h-9.0zM1540.1 460.86h4.5v0.85h-4.5zM1536.5 464.45h13.5v0.85h-13.5zM1543.7 468.04h5.4v0.85h-5.4zM1543.7 469.84h9.0v0.85h-9.0zM1543.7 471.63h4.5v0.85h-4.5zM1525.7 484.20h5.4v0.85h-5.4zM1529.3 485.99h9.0v0.85h-9.0zM1529.3 487.79h4.5v0.85h-4.5zM1529.3 489.58h10.8v0.85h-10.8zM1536.5 493.17h9.0v0.85h-9.0zM1536.5 494.97h4.5v0.85h-4.5zM1536.5 496.76h6.3v0.85h-6.3zM1540.1 498.56h9.9v0.85h-9.9zM1547.3 502.15h5.4v0.85h-5.4zM1547.3 503.94h9.0v0.85h-9.0zM1547.3 505.74h4.5v0.85h-4.5zM1547.3 507.53h5.4v0.85h-5.4zM1547.3 509.33h6.3v0.85h-6.3zM1540.1 514.72h12.6v0.85h-12.6zM1543.7 516.51h5.4v0.85h-5.4zM1543.7 518.31h9.0v0.85h-9.0zM1543.7 520.10h4.5v0.85h-4.5zM1540.1 523.69h9.0v0.85h-9.0zM1540.1 525.49h4.5v0.85h-4.5zM1536.5 529.08h13.5v0.85h-13.5zM1543.7 532.66h5.4v0.85h-5.4zM1543.7 534.46h9.0v0.85h-9.0zM1543.7 536.26h4.5v0.85h-4.5zM1525.7 548.82h5.4v0.85h-5.4zM1529.3 550.62h9.0v0.85h-9.0zM1529.3 552.41h4.5v0.85h-4.5zM1529.3 554.21h10.8v0.85h-10.8zM1536.5 557.80h9.0v0.85h-9.0zM1536.5 559.59h4.5v0.85h-4.5zM1536.5 561.38h6.3v0.85h-6.3zM1540.1 563.18h9.9v0.85h-9.9zM1547.3 566.77h5.4v0.85h-5.4zM1547.3 568.57h9.0v0.85h-9.0zM1547.3 570.36h4.5v0.85h-4.5zM1547.3 572.15h5.4v0.85h-5.4zM1547.3 573.95h6.3v0.85h-6.3zM1540.1 579.34h12.6v0.85h-12.6zM1543.7 581.13h5.4v0.85h-5.4zM1543.7 582.93h9.0v0.85h-9.0zM1543.7 584.72h4.5v0.85h-4.5zM1540.1 588.31h9.0v0.85h-9.0zM1540.1 590.11h4.5v0.85h-4.5zM1536.5 593.70h13.5v0.85h-13.5zM1543.7 597.28h5.4v0.85h-5.4zM1543.7 599.08h9.0v0.85h-9.0zM1543.7 600.88h4.5v0.85h-4.5zM1525.7 613.44h5.4v0.85h-5.4zM1529.3 615.24h9.0v0.85h-9.0zM1529.3 617.03h4.5v0.85h-4.5zM1529.3 618.83h10.8v0.85h-10.8zM1536.5 622.42h9.0v0.85h-9.0zM1536.5 624.21h4.5v0.85h-4.5zM1536.5 626.00h6.3v0.85h-6.3zM1540.1 627.80h9.9v0.85h-9.9zM1547.3 631.39h5.4v0.85h-5.4zM1547.3 633.19h9.0v0.85h-9.0zM1547.3 634.98h4.5v0.85h-4.5zM1547.3 636.77h5.4v0.85h-5.4zM1547.3 638.57h6.3v0.85h-6.3zM1540.1 643.96h12.6v0.85h-12.6zM1543.7 645.75h5.4v0.85h-5.4zM1543.7 647.55h9.0v0.85h-9.0zM1543.7 649.34h4.5v0.85h-4.5zM1540.1 652.93h9.0v0.85h-9.0zM1540.1 654.73h4.5v0.85h-4.5zM1536.5 658.32h13.5v0.85h-13.5zM1543.7 661.90h5.4v0.85h-5.4zM1543.7 663.70h9.0v0.85h-9.0zM1543.7 665.50h4.5v0.85h-4.5zM1525.7 678.06h5.4v0.85h-5.4zM1529.3 679.86h9.0v0.85h-9.0zM1529.3 681.65h4.5v0.85h-4.5zM1529.3 683.45h10.8v0.85h-10.8zM1536.5 687.03h9.0v0.85h-9.0zM1536.5 688.83h4.5v0.85h-4.5zM1536.5 690.62h6.3v0.85h-6.3zM1540.1 692.42h9.9v0.85h-9.9zM1547.3 696.01h5.4v0.85h-5.4zM1547.3 697.81h9.0v0.85h-9.0zM1547.3 699.60h4.5v0.85h-4.5zM1547.3 701.39h5.4v0.85h-5.4zM1547.3 703.19h6.3v0.85h-6.3zM1540.1 708.58h12.6v0.85h-12.6zM1543.7 710.37h5.4v0.85h-5.4zM1543.7 712.16h9.0v0.85h-9.0zM1543.7 713.96h4.5v0.85h-4.5zM1540.1 717.55h9.0v0.85h-9.0zM1540.1 719.35h4.5v0.85h-4.5zM1536.5 722.94h13.5v0.85h-13.5z"/><path fill="#b08a78" opacity="0.7" d="M1491.5 35.45h30.6v0.85h-30.6zM1499.6 37.25h7.2v0.85h-7.2zM1503.2 39.04h21.6v0.85h-21.6zM1514.9 118.02h9.0v0.85h-9.0zM1529.3 123.41h8.1v0.85h-8.1zM1522.1 125.20h1.8v0.85h-1.8zM1522.1 127.00h8.1v0.85h-8.1zM1524.8 132.38h5.4v0.85h-5.4zM1514.9 134.17h9.0v0.85h-9.0zM1529.3 143.15h8.1v0.85h-8.1zM1522.1 144.94h4.5v0.85h-4.5zM1522.1 146.74h8.1v0.85h-8.1zM1514.9 152.12h6.3v0.85h-6.3zM1524.8 155.71h10.8v0.85h-10.8zM1514.9 157.51h9.0v0.85h-9.0zM1526.6 164.69h29.7v0.85h-29.7zM1514.0 166.48h34.2v0.85h-34.2zM1511.3 168.28h4.5v0.85h-4.5zM1521.2 173.66h13.5v0.85h-13.5zM1520.3 177.25h17.1v0.85h-17.1zM1521.2 184.43h22.5v0.85h-22.5zM1521.2 188.02h14.4v0.85h-14.4zM1512.2 195.20h8.1v0.85h-8.1zM1514.9 202.38h74.1v0.85h-74.1zM1516.7 211.36h72.3v0.85h-72.3zM1517.6 213.15h71.4v0.85h-71.4zM1519.4 214.95h30.6v0.85h-30.6zM1520.3 247.26h3.6v0.85h-3.6zM1520.3 258.03h3.6v0.85h-3.6zM1520.3 268.80h3.6v0.85h-3.6zM1520.3 279.57h3.6v0.85h-3.6zM1520.3 290.34h3.6v0.85h-3.6zM1520.3 301.11h3.6v0.85h-3.6zM1520.3 311.88h3.6v0.85h-3.6zM1520.3 322.65h3.6v0.85h-3.6zM1520.3 333.42h3.6v0.85h-3.6zM1529.3 347.78h9.0v0.85h-9.0zM1524.8 349.57h9.0v0.85h-9.0zM1540.1 356.75h9.0v0.85h-9.0zM1535.6 358.55h8.1v0.85h-8.1zM1547.3 363.94h13.5v0.85h-13.5zM1542.8 365.73h8.1v0.85h-8.1zM1554.5 372.91h7.2v0.85h-7.2zM1558.1 374.70h10.8v0.85h-10.8zM1553.6 376.50h7.2v0.85h-7.2zM1554.5 378.29h1.8v0.85h-1.8zM1555.4 380.09h3.6v0.85h-3.6zM1550.9 387.27h6.3v0.85h-6.3zM1554.5 389.06h13.5v0.85h-13.5zM1550.0 390.86h7.2v0.85h-7.2zM1550.9 394.45h15.3v0.85h-15.3zM1546.4 396.24h7.2v0.85h-7.2zM1550.9 403.42h7.2v0.85h-7.2zM1554.5 405.22h13.5v0.85h-13.5zM1550.0 407.01h7.2v0.85h-7.2zM1540.1 421.38h9.0v0.85h-9.0zM1535.6 423.17h8.1v0.85h-8.1zM1547.3 428.55h13.5v0.85h-13.5zM1542.8 430.35h8.1v0.85h-8.1zM1554.5 437.53h7.2v0.85h-7.2zM1558.1 439.32h10.8v0.85h-10.8zM1553.6 441.12h7.2v0.85h-7.2zM1554.5 442.91h1.8v0.85h-1.8zM1555.4 444.71h3.6v0.85h-3.6zM1550.9 451.89h6.3v0.85h-6.3zM1554.5 453.68h13.5v0.85h-13.5zM1550.0 455.48h7.2v0.85h-7.2zM1550.9 459.07h15.3v0.85h-15.3zM1546.4 460.86h7.2v0.85h-7.2zM1550.9 468.04h7.2v0.85h-7.2zM1554.5 469.84h13.5v0.85h-13.5zM1550.0 471.63h7.2v0.85h-7.2zM1540.1 485.99h9.0v0.85h-9.0zM1535.6 487.79h8.1v0.85h-8.1zM1547.3 493.17h13.5v0.85h-13.5zM1542.8 494.97h8.1v0.85h-8.1zM1554.5 502.15h7.2v0.85h-7.2zM1558.1 503.94h10.8v0.85h-10.8zM1553.6 505.74h7.2v0.85h-7.2zM1554.5 507.53h1.8v0.85h-1.8zM1555.4 509.33h3.6v0.85h-3.6zM1550.9 516.51h6.3v0.85h-6.3zM1554.5 518.31h13.5v0.85h-13.5zM1550.0 520.10h7.2v0.85h-7.2zM1550.9 523.69h15.3v0.85h-15.3zM1546.4 525.49h7.2v0.85h-7.2zM1550.9 532.66h7.2v0.85h-7.2zM1554.5 534.46h13.5v0.85h-13.5zM1550.0 536.26h7.2v0.85h-7.2zM1540.1 550.62h9.0v0.85h-9.0zM1535.6 552.41h8.1v0.85h-8.1zM1547.3 557.80h13.5v0.85h-13.5zM1542.8 559.59h8.1v0.85h-8.1zM1554.5 566.77h7.2v0.85h-7.2zM1558.1 568.57h10.8v0.85h-10.8zM1553.6 570.36h7.2v0.85h-7.2zM1554.5 572.15h1.8v0.85h-1.8zM1555.4 573.95h3.6v0.85h-3.6zM1550.9 581.13h6.3v0.85h-6.3zM1554.5 582.93h13.5v0.85h-13.5zM1550.0 584.72h7.2v0.85h-7.2zM1550.9 588.31h15.3v0.85h-15.3zM1546.4 590.11h7.2v0.85h-7.2zM1550.9 597.28h7.2v0.85h-7.2zM1554.5 599.08h13.5v0.85h-13.5zM1550.0 600.88h7.2v0.85h-7.2zM1540.1 615.24h9.0v0.85h-9.0zM1535.6 617.03h8.1v0.85h-8.1zM1547.3 622.42h13.5v0.85h-13.5zM1542.8 624.21h8.1v0.85h-8.1zM1554.5 631.39h7.2v0.85h-7.2zM1558.1 633.19h10.8v0.85h-10.8zM1553.6 634.98h7.2v0.85h-7.2zM1554.5 636.77h1.8v0.85h-1.8zM1555.4 638.57h3.6v0.85h-3.6zM1550.9 645.75h6.3v0.85h-6.3zM1554.5 647.55h13.5v0.85h-13.5zM1550.0 649.34h7.2v0.85h-7.2zM1550.9 652.93h15.3v0.85h-15.3zM1546.4 654.73h7.2v0.85h-7.2zM1550.9 661.90h7.2v0.85h-7.2zM1554.5 663.70h13.5v0.85h-13.5zM1550.0 665.50h7.2v0.85h-7.2zM1540.1 679.86h9.0v0.85h-9.0zM1535.6 681.65h8.1v0.85h-8.1zM1547.3 687.03h13.5v0.85h-13.5zM1542.8 688.83h8.1v0.85h-8.1zM1554.5 696.01h7.2v0.85h-7.2zM1558.1 697.81h10.8v0.85h-10.8zM1553.6 699.60h7.2v0.85h-7.2zM1554.5 701.39h1.8v0.85h-1.8zM1555.4 703.19h3.6v0.85h-3.6zM1550.9 710.37h6.3v0.85h-6.3zM1554.5 712.16h13.5v0.85h-13.5zM1550.0 713.96h7.2v0.85h-7.2zM1550.9 717.55h15.3v0.85h-15.3zM1546.4 719.35h7.2v0.85h-7.2z"/><path fill="#a0b89a" opacity="0.7" d="M1514.0 197.00h0.9v0.85h-0.9zM1527.5 223.92h1.8v0.85h-1.8zM1520.3 225.72h1.8v0.85h-1.8zM1531.1 227.51h0.9v0.85h-0.9zM1528.4 229.31h0.9v0.85h-0.9zM1527.5 234.69h2.7v0.85h-2.7zM1520.3 236.49h1.8v0.85h-1.8zM1531.1 238.28h0.9v0.85h-0.9zM1528.4 240.08h0.9v0.85h-0.9zM1527.5 245.46h2.7v0.85h-2.7zM1531.1 249.05h0.9v0.85h-0.9zM1528.4 250.85h0.9v0.85h-0.9zM1527.5 256.24h2.7v0.85h-2.7zM1531.1 259.82h0.9v0.85h-0.9zM1528.4 261.62h0.9v0.85h-0.9zM1527.5 267.00h2.7v0.85h-2.7zM1531.1 270.59h0.9v0.85h-0.9zM1528.4 272.39h0.9v0.85h-0.9zM1527.5 277.77h2.7v0.85h-2.7zM1531.1 281.36h0.9v0.85h-0.9zM1528.4 283.16h0.9v0.85h-0.9zM1527.5 288.55h2.7v0.85h-2.7zM1531.1 292.13h0.9v0.85h-0.9zM1528.4 293.93h0.9v0.85h-0.9zM1527.5 299.31h2.7v0.85h-2.7zM1531.1 302.90h0.9v0.85h-0.9zM1528.4 304.70h0.9v0.85h-0.9zM1527.5 310.08h2.7v0.85h-2.7zM1531.1 313.67h0.9v0.85h-0.9zM1528.4 315.47h0.9v0.85h-0.9zM1527.5 320.85h2.7v0.85h-2.7zM1531.1 324.44h0.9v0.85h-0.9zM1528.4 326.24h0.9v0.85h-0.9zM1527.5 331.62h2.7v0.85h-2.7zM1531.1 335.21h0.9v0.85h-0.9zM1528.4 337.01h0.9v0.85h-0.9z"/><path fill="#a8a8b0" opacity="0.7" d="M1489.7 35.45h0.9v0.85h-0.9zM1522.1 35.45h0.9v0.85h-0.9zM1497.8 37.25h0.9v0.85h-0.9zM1506.8 37.25h0.9v0.85h-0.9zM1501.4 39.04h0.9v0.85h-0.9zM1524.8 39.04h0.9v0.85h-0.9zM1493.3 105.45h0.9v0.85h-0.9zM1499.6 107.25h0.9v0.85h-0.9zM1514.0 109.05h0.9v0.85h-0.9zM1505.0 110.84h0.9v0.85h-0.9zM1505.0 112.64h0.9v0.85h-0.9zM1514.9 116.22h0.9v0.85h-0.9zM1518.5 116.22h0.9v0.85h-0.9zM1513.1 118.02h0.9v0.85h-0.9zM1523.9 118.02h0.9v0.85h-0.9zM1515.8 119.81h0.9v0.85h-0.9zM1527.5 123.41h0.9v0.85h-0.9zM1537.4 123.41h0.9v0.85h-0.9zM1520.3 125.20h0.9v0.85h-0.9zM1523.9 125.20h0.9v0.85h-0.9zM1520.3 127.00h0.9v0.85h-0.9zM1508.6 130.58h0.9v0.85h-0.9zM1523.0 132.38h0.9v0.85h-0.9zM1530.2 132.38h0.9v0.85h-0.9zM1513.1 134.17h0.9v0.85h-0.9zM1505.0 135.97h0.9v0.85h-0.9zM1514.9 139.56h0.9v0.85h-0.9zM1527.5 143.15h0.9v0.85h-0.9zM1537.4 143.15h0.9v0.85h-0.9zM1520.3 144.94h0.9v0.85h-0.9zM1526.6 144.94h0.9v0.85h-0.9zM1520.3 146.74h0.9v0.85h-0.9zM1508.6 150.33h0.9v0.85h-0.9zM1513.1 152.12h0.9v0.85h-0.9zM1521.2 152.12h0.9v0.85h-0.9zM1515.8 153.92h0.9v0.85h-0.9zM1519.4 153.92h0.9v0.85h-0.9zM1523.0 155.71h0.9v0.85h-0.9zM1535.6 155.71h0.9v0.85h-0.9zM1513.1 157.51h0.9v0.85h-0.9zM1501.4 161.10h0.9v0.85h-0.9zM1507.7 162.89h0.9v0.85h-0.9zM1524.8 164.69h0.9v0.85h-0.9zM1556.3 164.69h0.9v0.85h-0.9zM1512.2 166.48h0.9v0.85h-0.9zM1548.2 166.48h0.9v0.85h-0.9zM1509.5 168.28h0.9v0.85h-0.9zM1515.8 168.28h0.9v0.85h-0.9zM1512.2 170.07h0.9v0.85h-0.9zM1518.5 171.87h0.9v0.85h-0.9zM1519.4 173.66h0.9v0.85h-0.9zM1534.7 173.66h0.9v0.85h-0.9zM1519.4 175.46h0.9v0.85h-0.9zM1518.5 177.25h0.9v0.85h-0.9zM1508.6 180.84h0.9v0.85h-0.9zM1522.1 182.64h0.9v0.85h-0.9zM1519.4 184.43h0.9v0.85h-0.9zM1543.7 184.43h0.9v0.85h-0.9zM1518.5 186.23h0.9v0.85h-0.9zM1519.4 188.02h0.9v0.85h-0.9zM1505.0 193.41h0.9v0.85h-0.9zM1510.4 195.20h0.9v0.85h-0.9zM1520.3 195.20h0.9v0.85h-0.9zM1512.2 197.00h0.9v0.85h-0.9zM1501.4 198.79h0.9v0.85h-0.9zM1505.0 200.59h0.9v0.85h-0.9zM1513.1 202.38h0.9v0.85h-0.9zM1513.1 204.18h0.9v0.85h-0.9zM1524.8 205.97h0.9v0.85h-0.9zM1528.4 205.97h0.9v0.85h-0.9zM1523.9 207.77h0.9v0.85h-0.9zM1527.5 207.77h0.9v0.85h-0.9zM1522.1 209.56h0.9v0.85h-0.9zM1525.7 209.56h0.9v0.85h-0.9zM1514.9 211.36h0.9v0.85h-0.9zM1515.8 213.15h0.9v0.85h-0.9zM1517.6 214.95h0.9v0.85h-0.9zM1505.0 216.74h0.9v0.85h-0.9zM1520.3 218.54h0.9v0.85h-0.9zM1524.8 220.33h0.9v0.85h-0.9zM1523.9 222.13h0.9v0.85h-0.9zM1525.7 223.92h0.9v0.85h-0.9zM1529.3 223.92h0.9v0.85h-0.9zM1518.5 225.72h0.9v0.85h-0.9zM1522.1 225.72h0.9v0.85h-0.9zM1529.3 227.51h0.9v0.85h-0.9zM1532.0 227.51h0.9v0.85h-0.9zM1526.6 229.31h0.9v0.85h-0.9zM1512.2 231.10h0.9v0.85h-0.9zM1521.2 232.90h0.9v0.85h-0.9zM1525.7 234.69h0.9v0.85h-0.9zM1530.2 234.69h0.9v0.85h-0.9zM1518.5 236.49h0.9v0.85h-0.9zM1522.1 236.49h0.9v0.85h-0.9zM1529.3 238.28h0.9v0.85h-0.9zM1532.0 238.28h0.9v0.85h-0.9zM1526.6 240.08h0.9v0.85h-0.9zM1512.2 241.87h0.9v0.85h-0.9zM1531.1 243.67h0.9v0.85h-0.9zM1525.7 245.46h0.9v0.85h-0.9zM1530.2 245.46h0.9v0.85h-0.9zM1518.5 247.26h0.9v0.85h-0.9zM1523.9 247.26h0.9v0.85h-0.9zM1529.3 249.05h0.9v0.85h-0.9zM1532.0 249.05h0.9v0.85h-0.9zM1526.6 250.85h0.9v0.85h-0.9zM1512.2 252.64h0.9v0.85h-0.9zM1536.5 254.44h0.9v0.85h-0.9zM1525.7 256.24h0.9v0.85h-0.9zM1530.2 256.24h0.9v0.85h-0.9zM1518.5 258.03h0.9v0.85h-0.9zM1523.9 258.03h0.9v0.85h-0.9zM1529.3 259.82h0.9v0.85h-0.9zM1532.0 259.82h0.9v0.85h-0.9zM1526.6 261.62h0.9v0.85h-0.9zM1512.2 263.42h0.9v0.85h-0.9zM1551.8 265.21h0.9v0.85h-0.9zM1525.7 267.00h0.9v0.85h-0.9zM1530.2 267.00h0.9v0.85h-0.9zM1518.5 268.80h0.9v0.85h-0.9zM1523.9 268.80h0.9v0.85h-0.9zM1529.3 270.59h0.9v0.85h-0.9zM1532.0 270.59h0.9v0.85h-0.9zM1526.6 272.39h0.9v0.85h-0.9zM1512.2 274.19h0.9v0.85h-0.9zM1567.1 275.98h0.9v0.85h-0.9zM1525.7 277.77h0.9v0.85h-0.9zM1530.2 277.77h0.9v0.85h-0.9zM1518.5 279.57h0.9v0.85h-0.9zM1523.9 279.57h0.9v0.85h-0.9zM1529.3 281.36h0.9v0.85h-0.9zM1532.0 281.36h0.9v0.85h-0.9zM1526.6 283.16h0.9v0.85h-0.9zM1512.2 284.95h0.9v0.85h-0.9zM1529.3 286.75h0.9v0.85h-0.9zM1525.7 288.55h0.9v0.85h-0.9zM1530.2 288.55h0.9v0.85h-0.9zM1518.5 290.34h0.9v0.85h-0.9zM1523.9 290.34h0.9v0.85h-0.9zM1529.3 292.13h0.9v0.85h-0.9zM1532.0 292.13h0.9v0.85h-0.9zM1526.6 293.93h0.9v0.85h-0.9zM1512.2 295.72h0.9v0.85h-0.9zM1528.4 297.52h0.9v0.85h-0.9zM1525.7 299.31h0.9v0.85h-0.9zM1530.2 299.31h0.9v0.85h-0.9zM1518.5 301.11h0.9v0.85h-0.9zM1523.9 301.11h0.9v0.85h-0.9zM1529.3 302.90h0.9v0.85h-0.9zM1532.0 302.90h0.9v0.85h-0.9zM1526.6 304.70h0.9v0.85h-0.9zM1512.2 306.50h0.9v0.85h-0.9zM1582.4 308.29h0.9v0.85h-0.9zM1525.7 310.08h0.9v0.85h-0.9zM1530.2 310.08h0.9v0.85h-0.9zM1518.5 311.88h0.9v0.85h-0.9zM1523.9 311.88h0.9v0.85h-0.9zM1529.3 313.67h0.9v0.85h-0.9zM1532.0 313.67h0.9v0.85h-0.9zM1526.6 315.47h0.9v0.85h-0.9zM1512.2 317.26h0.9v0.85h-0.9zM1582.4 319.06h0.9v0.85h-0.9zM1525.7 320.85h0.9v0.85h-0.9zM1530.2 320.85h0.9v0.85h-0.9zM1518.5 322.65h0.9v0.85h-0.9zM1523.9 322.65h0.9v0.85h-0.9zM1529.3 324.44h0.9v0.85h-0.9zM1532.0 324.44h0.9v0.85h-0.9zM1526.6 326.24h0.9v0.85h-0.9zM1512.2 328.03h0.9v0.85h-0.9zM1536.5 329.83h0.9v0.85h-0.9zM1525.7 331.62h0.9v0.85h-0.9zM1530.2 331.62h0.9v0.85h-0.9zM1518.5 333.42h0.9v0.85h-0.9zM1523.9 333.42h0.9v0.85h-0.9zM1529.3 335.21h0.9v0.85h-0.9zM1532.0 335.21h0.9v0.85h-0.9zM1526.6 337.01h0.9v0.85h-0.9zM1508.6 340.60h0.9v0.85h-0.9zM1523.9 342.39h0.9v0.85h-0.9zM1519.4 345.98h0.9v0.85h-0.9zM1527.5 347.78h0.9v0.85h-0.9zM1538.3 347.78h0.9v0.85h-0.9zM1523.0 349.57h0.9v0.85h-0.9zM1533.8 349.57h0.9v0.85h-0.9zM1529.3 351.37h0.9v0.85h-0.9zM1531.1 354.96h0.9v0.85h-0.9zM1538.3 356.75h0.9v0.85h-0.9zM1549.1 356.75h0.9v0.85h-0.9zM1533.8 358.55h0.9v0.85h-0.9zM1543.7 358.55h0.9v0.85h-0.9zM1540.1 360.34h0.9v0.85h-0.9zM1545.5 363.94h0.9v0.85h-0.9zM1560.8 363.94h0.9v0.85h-0.9zM1541.0 365.73h0.9v0.85h-0.9zM1550.9 365.73h0.9v0.85h-0.9zM1542.8 367.52h0.9v0.85h-0.9zM1550.0 369.32h0.9v0.85h-0.9zM1552.7 372.91h0.9v0.85h-0.9zM1561.7 372.91h0.9v0.85h-0.9zM1556.3 374.70h0.9v0.85h-0.9zM1568.9 374.70h0.9v0.85h-0.9zM1551.8 376.50h0.9v0.85h-0.9zM1560.8 376.50h0.9v0.85h-0.9zM1552.7 378.29h0.9v0.85h-0.9zM1556.3 378.29h0.9v0.85h-0.9zM1553.6 380.09h0.9v0.85h-0.9zM1541.0 383.68h0.9v0.85h-0.9zM1552.7 385.47h0.9v0.85h-0.9zM1549.1 387.27h0.9v0.85h-0.9zM1557.2 387.27h0.9v0.85h-0.9zM1552.7 389.06h0.9v0.85h-0.9zM1568.0 389.06h0.9v0.85h-0.9zM1548.2 390.86h0.9v0.85h-0.9zM1541.0 392.65h0.9v0.85h-0.9zM1549.1 394.45h0.9v0.85h-0.9zM1566.2 394.45h0.9v0.85h-0.9zM1544.6 396.24h0.9v0.85h-0.9zM1537.4 398.04h0.9v0.85h-0.9zM1550.0 399.83h0.9v0.85h-0.9zM1549.1 403.42h0.9v0.85h-0.9zM1558.1 403.42h0.9v0.85h-0.9zM1552.7 405.22h0.9v0.85h-0.9zM1568.0 405.22h0.9v0.85h-0.9zM1548.2 407.01h0.9v0.85h-0.9zM1526.6 415.99h0.9v0.85h-0.9zM1531.1 419.58h0.9v0.85h-0.9zM1538.3 421.38h0.9v0.85h-0.9zM1549.1 421.38h0.9v0.85h-0.9zM1533.8 423.17h0.9v0.85h-0.9zM1543.7 423.17h0.9v0.85h-0.9zM1540.1 424.96h0.9v0.85h-0.9zM1545.5 428.55h0.9v0.85h-0.9zM1560.8 428.55h0.9v0.85h-0.9zM1541.0 430.35h0.9v0.85h-0.9zM1550.9 430.35h0.9v0.85h-0.9zM1542.8 432.14h0.9v0.85h-0.9zM1550.0 433.94h0.9v0.85h-0.9zM1552.7 437.53h0.9v0.85h-0.9zM1561.7 437.53h0.9v0.85h-0.9zM1556.3 439.32h0.9v0.85h-0.9zM1568.9 439.32h0.9v0.85h-0.9zM1551.8 441.12h0.9v0.85h-0.9zM1560.8 441.12h0.9v0.85h-0.9zM1552.7 442.91h0.9v0.85h-0.9zM1556.3 442.91h0.9v0.85h-0.9zM1553.6 444.71h0.9v0.85h-0.9zM1541.0 448.30h0.9v0.85h-0.9zM1552.7 450.09h0.9v0.85h-0.9zM1549.1 451.89h0.9v0.85h-0.9zM1557.2 451.89h0.9v0.85h-0.9zM1552.7 453.68h0.9v0.85h-0.9zM1568.0 453.68h0.9v0.85h-0.9zM1548.2 455.48h0.9v0.85h-0.9zM1541.0 457.27h0.9v0.85h-0.9zM1549.1 459.07h0.9v0.85h-0.9zM1566.2 459.07h0.9v0.85h-0.9zM1544.6 460.86h0.9v0.85h-0.9zM1537.4 462.66h0.9v0.85h-0.9zM1550.0 464.45h0.9v0.85h-0.9zM1549.1 468.04h0.9v0.85h-0.9zM1558.1 468.04h0.9v0.85h-0.9zM1552.7 469.84h0.9v0.85h-0.9zM1568.0 469.84h0.9v0.85h-0.9zM1548.2 471.63h0.9v0.85h-0.9zM1526.6 480.61h0.9v0.85h-0.9zM1531.1 484.20h0.9v0.85h-0.9zM1538.3 485.99h0.9v0.85h-0.9zM1549.1 485.99h0.9v0.85h-0.9zM1533.8 487.79h0.9v0.85h-0.9zM1543.7 487.79h0.9v0.85h-0.9zM1540.1 489.58h0.9v0.85h-0.9zM1545.5 493.17h0.9v0.85h-0.9zM1560.8 493.17h0.9v0.85h-0.9zM1541.0 494.97h0.9v0.85h-0.9zM1550.9 494.97h0.9v0.85h-0.9zM1542.8 496.76h0.9v0.85h-0.9zM1550.0 498.56h0.9v0.85h-0.9zM1552.7 502.15h0.9v0.85h-0.9zM1561.7 502.15h0.9v0.85h-0.9zM1556.3 503.94h0.9v0.85h-0.9zM1568.9 503.94h0.9v0.85h-0.9zM1551.8 505.74h0.9v0.85h-0.9zM1560.8 505.74h0.9v0.85h-0.9zM1552.7 507.53h0.9v0.85h-0.9zM1556.3 507.53h0.9v0.85h-0.9zM1553.6 509.33h0.9v0.85h-0.9zM1541.0 512.92h0.9v0.85h-0.9zM1552.7 514.72h0.9v0.85h-0.9zM1549.1 516.51h0.9v0.85h-0.9zM1557.2 516.51h0.9v0.85h-0.9zM1552.7 518.31h0.9v0.85h-0.9zM1568.0 518.31h0.9v0.85h-0.9zM1548.2 520.10h0.9v0.85h-0.9zM1541.0 521.89h0.9v0.85h-0.9zM1549.1 523.69h0.9v0.85h-0.9zM1566.2 523.69h0.9v0.85h-0.9zM1544.6 525.49h0.9v0.85h-0.9zM1537.4 527.28h0.9v0.85h-0.9zM1550.0 529.08h0.9v0.85h-0.9zM1549.1 532.66h0.9v0.85h-0.9zM1558.1 532.66h0.9v0.85h-0.9zM1552.7 534.46h0.9v0.85h-0.9zM1568.0 534.46h0.9v0.85h-0.9zM1548.2 536.26h0.9v0.85h-0.9zM1526.6 545.23h0.9v0.85h-0.9zM1531.1 548.82h0.9v0.85h-0.9zM1538.3 550.62h0.9v0.85h-0.9zM1549.1 550.62h0.9v0.85h-0.9zM1533.8 552.41h0.9v0.85h-0.9zM1543.7 552.41h0.9v0.85h-0.9zM1540.1 554.21h0.9v0.85h-0.9zM1545.5 557.80h0.9v0.85h-0.9zM1560.8 557.80h0.9v0.85h-0.9zM1541.0 559.59h0.9v0.85h-0.9zM1550.9 559.59h0.9v0.85h-0.9zM1542.8 561.38h0.9v0.85h-0.9zM1550.0 563.18h0.9v0.85h-0.9zM1552.7 566.77h0.9v0.85h-0.9zM1561.7 566.77h0.9v0.85h-0.9zM1556.3 568.57h0.9v0.85h-0.9zM1568.9 568.57h0.9v0.85h-0.9zM1551.8 570.36h0.9v0.85h-0.9zM1560.8 570.36h0.9v0.85h-0.9zM1552.7 572.15h0.9v0.85h-0.9zM1556.3 572.15h0.9v0.85h-0.9zM1553.6 573.95h0.9v0.85h-0.9zM1541.0 577.54h0.9v0.85h-0.9zM1552.7 579.34h0.9v0.85h-0.9zM1549.1 581.13h0.9v0.85h-0.9zM1557.2 581.13h0.9v0.85h-0.9zM1552.7 582.93h0.9v0.85h-0.9zM1568.0 582.93h0.9v0.85h-0.9zM1548.2 584.72h0.9v0.85h-0.9zM1541.0 586.51h0.9v0.85h-0.9zM1549.1 588.31h0.9v0.85h-0.9zM1566.2 588.31h0.9v0.85h-0.9zM1544.6 590.11h0.9v0.85h-0.9zM1537.4 591.90h0.9v0.85h-0.9zM1550.0 593.70h0.9v0.85h-0.9zM1549.1 597.28h0.9v0.85h-0.9zM1558.1 597.28h0.9v0.85h-0.9zM1552.7 599.08h0.9v0.85h-0.9zM1568.0 599.08h0.9v0.85h-0.9zM1548.2 600.88h0.9v0.85h-0.9zM1526.6 609.85h0.9v0.85h-0.9zM1531.1 613.44h0.9v0.85h-0.9zM1538.3 615.24h0.9v0.85h-0.9zM1549.1 615.24h0.9v0.85h-0.9zM1533.8 617.03h0.9v0.85h-0.9zM1543.7 617.03h0.9v0.85h-0.9zM1540.1 618.83h0.9v0.85h-0.9zM1545.5 622.42h0.9v0.85h-0.9zM1560.8 622.42h0.9v0.85h-0.9zM1541.0 624.21h0.9v0.85h-0.9zM1550.9 624.21h0.9v0.85h-0.9zM1542.8 626.00h0.9v0.85h-0.9zM1550.0 627.80h0.9v0.85h-0.9zM1552.7 631.39h0.9v0.85h-0.9zM1561.7 631.39h0.9v0.85h-0.9zM1556.3 633.19h0.9v0.85h-0.9zM1568.9 633.19h0.9v0.85h-0.9zM1551.8 634.98h0.9v0.85h-0.9zM1560.8 634.98h0.9v0.85h-0.9zM1552.7 636.77h0.9v0.85h-0.9zM1556.3 636.77h0.9v0.85h-0.9zM1553.6 638.57h0.9v0.85h-0.9zM1541.0 642.16h0.9v0.85h-0.9zM1552.7 643.96h0.9v0.85h-0.9zM1549.1 645.75h0.9v0.85h-0.9zM1557.2 645.75h0.9v0.85h-0.9zM1552.7 647.55h0.9v0.85h-0.9zM1568.0 647.55h0.9v0.85h-0.9zM1548.2 649.34h0.9v0.85h-0.9zM1541.0 651.13h0.9v0.85h-0.9zM1549.1 652.93h0.9v0.85h-0.9zM1566.2 652.93h0.9v0.85h-0.9zM1544.6 654.73h0.9v0.85h-0.9zM1537.4 656.52h0.9v0.85h-0.9zM1550.0 658.32h0.9v0.85h-0.9zM1549.1 661.90h0.9v0.85h-0.9zM1558.1 661.90h0.9v0.85h-0.9zM1552.7 663.70h0.9v0.85h-0.9zM1568.0 663.70h0.9v0.85h-0.9zM1548.2 665.50h0.9v0.85h-0.9zM1526.6 674.47h0.9v0.85h-0.9zM1531.1 678.06h0.9v0.85h-0.9zM1538.3 679.86h0.9v0.85h-0.9zM1549.1 679.86h0.9v0.85h-0.9zM1533.8 681.65h0.9v0.85h-0.9zM1543.7 681.65h0.9v0.85h-0.9zM1540.1 683.45h0.9v0.85h-0.9zM1545.5 687.03h0.9v0.85h-0.9zM1560.8 687.03h0.9v0.85h-0.9zM1541.0 688.83h0.9v0.85h-0.9zM1550.9 688.83h0.9v0.85h-0.9zM1542.8 690.62h0.9v0.85h-0.9zM1550.0 692.42h0.9v0.85h-0.9zM1552.7 696.01h0.9v0.85h-0.9zM1561.7 696.01h0.9v0.85h-0.9zM1556.3 697.81h0.9v0.85h-0.9zM1568.9 697.81h0.9v0.85h-0.9zM1551.8 699.60h0.9v0.85h-0.9zM1560.8 699.60h0.9v0.85h-0.9zM1552.7 701.39h0.9v0.85h-0.9zM1556.3 701.39h0.9v0.85h-0.9zM1553.6 703.19h0.9v0.85h-0.9zM1541.0 706.78h0.9v0.85h-0.9zM1552.7 708.58h0.9v0.85h-0.9zM1549.1 710.37h0.9v0.85h-0.9zM1557.2 710.37h0.9v0.85h-0.9zM1552.7 712.16h0.9v0.85h-0.9zM1568.0 712.16h0.9v0.85h-0.9zM1548.2 713.96h0.9v0.85h-0.9zM1541.0 715.75h0.9v0.85h-0.9zM1549.1 717.55h0.9v0.85h-0.9zM1566.2 717.55h0.9v0.85h-0.9zM1544.6 719.35h0.9v0.85h-0.9zM1537.4 721.14h0.9v0.85h-0.9zM1550.0 722.94h0.9v0.85h-0.9z"/><path fill="#c0b060" opacity="0.7" d="M1495.1 105.45h0.9v0.85h-0.9zM1501.4 107.25h0.9v0.85h-0.9zM1515.8 109.05h0.9v0.85h-0.9zM1506.8 110.84h0.9v0.85h-0.9zM1506.8 112.64h0.9v0.85h-0.9zM1504.1 114.43h0.9v0.85h-0.9zM1516.7 116.22h0.9v0.85h-0.9zM1517.6 116.22h0.9v0.85h-0.9zM1517.6 119.81h0.9v0.85h-0.9zM1511.3 121.61h0.9v0.85h-0.9zM1511.3 128.79h0.9v0.85h-0.9zM1507.7 130.58h0.9v0.85h-0.9zM1504.1 135.97h0.9v0.85h-0.9zM1504.1 137.76h0.9v0.85h-0.9zM1516.7 139.56h0.9v0.85h-0.9zM1511.3 141.35h0.9v0.85h-0.9zM1511.3 148.53h0.9v0.85h-0.9zM1507.7 150.33h0.9v0.85h-0.9zM1517.6 153.92h0.9v0.85h-0.9zM1518.5 153.92h0.9v0.85h-0.9zM1504.1 159.30h0.9v0.85h-0.9zM1500.5 161.10h0.9v0.85h-0.9zM1509.5 162.89h0.9v0.85h-0.9zM1514.0 170.07h0.9v0.85h-0.9zM1520.3 171.87h0.9v0.85h-0.9zM1521.2 175.46h0.9v0.85h-0.9zM1511.3 179.05h0.9v0.85h-0.9zM1507.7 180.84h0.9v0.85h-0.9zM1523.9 182.64h0.9v0.85h-0.9zM1520.3 186.23h0.9v0.85h-0.9zM1511.3 189.82h0.9v0.85h-0.9zM1507.7 191.61h0.9v0.85h-0.9zM1504.1 193.41h0.9v0.85h-0.9zM1500.5 198.79h0.9v0.85h-0.9zM1506.8 200.59h0.9v0.85h-0.9zM1514.9 204.18h0.9v0.85h-0.9zM1526.6 205.97h0.9v0.85h-0.9zM1527.5 205.97h0.9v0.85h-0.9zM1525.7 207.77h0.9v0.85h-0.9zM1526.6 207.77h0.9v0.85h-0.9zM1523.9 209.56h0.9v0.85h-0.9zM1524.8 209.56h0.9v0.85h-0.9zM1504.1 216.74h0.9v0.85h-0.9zM1522.1 218.54h0.9v0.85h-0.9zM1526.6 220.33h0.9v0.85h-0.9zM1525.7 222.13h0.9v0.85h-0.9zM1511.3 231.10h0.9v0.85h-0.9zM1523.0 232.90h0.9v0.85h-0.9zM1511.3 241.87h0.9v0.85h-0.9zM1532.9 243.67h0.9v0.85h-0.9zM1511.3 252.64h0.9v0.85h-0.9zM1538.3 254.44h0.9v0.85h-0.9zM1511.3 263.42h0.9v0.85h-0.9zM1553.6 265.21h0.9v0.85h-0.9zM1511.3 274.19h0.9v0.85h-0.9zM1568.9 275.98h0.9v0.85h-0.9zM1511.3 284.95h0.9v0.85h-0.9zM1531.1 286.75h0.9v0.85h-0.9zM1511.3 295.72h0.9v0.85h-0.9zM1530.2 297.52h0.9v0.85h-0.9zM1511.3 306.50h0.9v0.85h-0.9zM1584.2 308.29h0.9v0.85h-0.9zM1511.3 317.26h0.9v0.85h-0.9zM1584.2 319.06h0.9v0.85h-0.9zM1511.3 328.03h0.9v0.85h-0.9zM1538.3 329.83h0.9v0.85h-0.9zM1511.3 338.80h0.9v0.85h-0.9zM1507.7 340.60h0.9v0.85h-0.9zM1525.7 342.39h0.9v0.85h-0.9zM1511.3 344.19h0.9v0.85h-0.9zM1521.2 345.98h0.9v0.85h-0.9zM1531.1 351.37h0.9v0.85h-0.9zM1522.1 353.16h0.9v0.85h-0.9zM1532.9 354.96h0.9v0.85h-0.9zM1541.9 360.34h0.9v0.85h-0.9zM1532.9 362.14h0.9v0.85h-0.9zM1544.6 367.52h0.9v0.85h-0.9zM1551.8 369.32h0.9v0.85h-0.9zM1543.7 371.11h0.9v0.85h-0.9zM1543.7 381.88h0.9v0.85h-0.9zM1540.1 383.68h0.9v0.85h-0.9zM1554.5 385.47h0.9v0.85h-0.9zM1540.1 392.65h0.9v0.85h-0.9zM1536.5 398.04h0.9v0.85h-0.9zM1551.8 399.83h0.9v0.85h-0.9zM1540.1 401.63h0.9v0.85h-0.9zM1540.1 408.81h0.9v0.85h-0.9zM1536.5 410.60h0.9v0.85h-0.9zM1532.9 412.40h0.9v0.85h-0.9zM1529.3 414.19h0.9v0.85h-0.9zM1525.7 415.99h0.9v0.85h-0.9zM1522.1 417.78h0.9v0.85h-0.9zM1532.9 419.58h0.9v0.85h-0.9zM1541.9 424.96h0.9v0.85h-0.9zM1532.9 426.76h0.9v0.85h-0.9zM1544.6 432.14h0.9v0.85h-0.9zM1551.8 433.94h0.9v0.85h-0.9zM1543.7 435.73h0.9v0.85h-0.9zM1543.7 446.50h0.9v0.85h-0.9zM1540.1 448.30h0.9v0.85h-0.9zM1554.5 450.09h0.9v0.85h-0.9zM1540.1 457.27h0.9v0.85h-0.9zM1536.5 462.66h0.9v0.85h-0.9zM1551.8 464.45h0.9v0.85h-0.9zM1540.1 466.25h0.9v0.85h-0.9zM1540.1 473.43h0.9v0.85h-0.9zM1536.5 475.22h0.9v0.85h-0.9zM1532.9 477.02h0.9v0.85h-0.9zM1529.3 478.81h0.9v0.85h-0.9zM1525.7 480.61h0.9v0.85h-0.9zM1522.1 482.40h0.9v0.85h-0.9zM1532.9 484.20h0.9v0.85h-0.9zM1541.9 489.58h0.9v0.85h-0.9zM1532.9 491.38h0.9v0.85h-0.9zM1544.6 496.76h0.9v0.85h-0.9zM1551.8 498.56h0.9v0.85h-0.9zM1543.7 500.35h0.9v0.85h-0.9zM1543.7 511.12h0.9v0.85h-0.9zM1540.1 512.92h0.9v0.85h-0.9zM1554.5 514.72h0.9v0.85h-0.9zM1540.1 521.89h0.9v0.85h-0.9zM1536.5 527.28h0.9v0.85h-0.9zM1551.8 529.08h0.9v0.85h-0.9zM1540.1 530.87h0.9v0.85h-0.9zM1540.1 538.05h0.9v0.85h-0.9zM1536.5 539.85h0.9v0.85h-0.9zM1532.9 541.64h0.9v0.85h-0.9zM1529.3 543.43h0.9v0.85h-0.9zM1525.7 545.23h0.9v0.85h-0.9zM1522.1 547.03h0.9v0.85h-0.9zM1532.9 548.82h0.9v0.85h-0.9zM1541.9 554.21h0.9v0.85h-0.9zM1532.9 556.00h0.9v0.85h-0.9zM1544.6 561.38h0.9v0.85h-0.9zM1551.8 563.18h0.9v0.85h-0.9zM1543.7 564.98h0.9v0.85h-0.9zM1543.7 575.75h0.9v0.85h-0.9zM1540.1 577.54h0.9v0.85h-0.9zM1554.5 579.34h0.9v0.85h-0.9zM1540.1 586.51h0.9v0.85h-0.9zM1536.5 591.90h0.9v0.85h-0.9zM1551.8 593.70h0.9v0.85h-0.9zM1540.1 595.49h0.9v0.85h-0.9zM1540.1 602.67h0.9v0.85h-0.9zM1536.5 604.47h0.9v0.85h-0.9zM1532.9 606.26h0.9v0.85h-0.9zM1529.3 608.06h0.9v0.85h-0.9zM1525.7 609.85h0.9v0.85h-0.9zM1522.1 611.64h0.9v0.85h-0.9zM1532.9 613.44h0.9v0.85h-0.9zM1541.9 618.83h0.9v0.85h-0.9zM1532.9 620.62h0.9v0.85h-0.9zM1544.6 626.00h0.9v0.85h-0.9zM1551.8 627.80h0.9v0.85h-0.9zM1543.7 629.60h0.9v0.85h-0.9zM1543.7 640.37h0.9v0.85h-0.9zM1540.1 642.16h0.9v0.85h-0.9zM1554.5 643.96h0.9v0.85h-0.9zM1540.1 651.13h0.9v0.85h-0.9zM1536.5 656.52h0.9v0.85h-0.9zM1551.8 658.32h0.9v0.85h-0.9zM1540.1 660.11h0.9v0.85h-0.9zM1540.1 667.29h0.9v0.85h-0.9zM1536.5 669.09h0.9v0.85h-0.9zM1532.9 670.88h0.9v0.85h-0.9zM1529.3 672.68h0.9v0.85h-0.9zM1525.7 674.47h0.9v0.85h-0.9zM1522.1 676.26h0.9v0.85h-0.9zM1532.9 678.06h0.9v0.85h-0.9zM1541.9 683.45h0.9v0.85h-0.9zM1532.9 685.24h0.9v0.85h-0.9zM1544.6 690.62h0.9v0.85h-0.9zM1551.8 692.42h0.9v0.85h-0.9zM1543.7 694.22h0.9v0.85h-0.9zM1543.7 704.99h0.9v0.85h-0.9zM1540.1 706.78h0.9v0.85h-0.9zM1554.5 708.58h0.9v0.85h-0.9zM1540.1 715.75h0.9v0.85h-0.9zM1536.5 721.14h0.9v0.85h-0.9zM1551.8 722.94h0.9v0.85h-0.9z"/><path fill="#29537f" d="M1492.7 40.38h3.3v2.04h-3.3zM1481.0 42.18h30.3v2.04h-30.3zM1481.0 43.98h20.4v2.04h-20.4zM1481.0 45.77h36.6v2.04h-36.6zM1481.0 47.56h108.0v2.04h-108.0zM1481.0 49.36h14.1v2.04h-14.1zM1481.0 51.16h11.4v2.04h-11.4zM1481.0 52.95h21.3v2.04h-21.3zM1481.0 54.74h25.8v2.04h-25.8zM1481.0 56.54h32.1v2.04h-32.1zM1481.0 58.34h26.7v2.04h-26.7zM1481.0 60.13h15.0v2.04h-15.0zM1481.0 61.92h31.2v2.04h-31.2zM1481.0 63.72h22.2v2.04h-22.2zM1481.0 65.52h24.9v2.04h-24.9zM1481.0 67.31h28.5v2.04h-28.5zM1481.0 69.10h22.2v2.04h-22.2zM1481.0 70.90h25.8v2.04h-25.8zM1481.0 72.69h29.4v2.04h-29.4zM1481.0 74.49h33.9v2.04h-33.9zM1481.0 76.28h32.1v2.04h-32.1zM1481.0 78.08h33.0v2.04h-33.0zM1481.0 79.88h38.4v2.04h-38.4zM1481.0 81.67h42.9v2.04h-42.9zM1481.0 83.47h37.5v2.04h-37.5zM1481.0 85.26h44.7v2.04h-44.7zM1481.0 87.06h45.6v2.04h-45.6zM1481.0 88.85h41.1v2.04h-41.1zM1481.0 90.64h36.6v2.04h-36.6zM1481.0 92.44h21.3v2.04h-21.3zM1481.0 94.23h17.7v2.04h-17.7zM1481.0 96.03h15.0v2.04h-15.0zM1481.0 97.82h28.5v2.04h-28.5zM1481.0 99.62h32.1v2.04h-32.1zM1481.0 101.41h10.5v2.04h-10.5zM1481.0 103.21h6.0v2.04h-6.0z"/></svg>
<div class="a" style="left:1589px;top:35px;width:11px;height:687px;background:#222336;border-left:1px solid #2a2c3e"></div>
<div class="a" style="left:1589px;top:34.4px;width:11px;height:2.6px;background:#9b9ca6"></div>
<div class="a" style="left:329px;top:3px;width:1271px;height:31.4px;background:#222336;box-shadow:0 1px 2px rgba(0,0,0,0.4)"></div>
<div class="a" style="left:680.5px;top:3px;width:289px;height:31.5px;background:#2a2c3f"></div>
<div class="a" style="left:364.2px;top:3px;width:1px;height:31.5px;background:#3a3c50"></div>
<div class="a" style="left:425.4px;top:3px;width:1px;height:31.5px;background:#3a3c50"></div>
<svg class="a" style="left:344px;top:11.5px;overflow:visible" width="13" height="14" viewBox="0 0 13 14"><path d="M1.6 1.2 Q1 0.9 1 1.6 V12.4 Q1 13.1 1.6 12.8 L12 7.4 Q12.6 7 12 6.6 Z" fill="#3a9c70" stroke="#3a9c70" stroke-width="1" stroke-linejoin="round"/></svg>
<svg class="a" style="left:373px;top:11px;overflow:visible" width="14.5" height="15.5" viewBox="0 0 14.5 15.5"><g fill="#2fb4c4"><rect x="7" y="0" width="0.9" height="2.2"/><rect x="3.2" y="2" width="8.2" height="6.4" rx="1.6"/><rect x="1.6" y="3.6" width="1.3" height="3.6" rx="0.6"/><rect x="11.7" y="3.6" width="1.3" height="3.6" rx="0.6"/><path d="M0.6 15.2 Q0.4 10.6 4.6 10 H10 Q14.2 10.6 14 15.2 Z"/></g><rect x="4.6" y="3.8" width="1.6" height="1.4" fill="#222336"/><rect x="8.4" y="3.8" width="1.6" height="1.4" fill="#222336"/><rect x="5.2" y="6.4" width="4.2" height="0.8" fill="#222336"/><rect x="5.2" y="12" width="4.2" height="2.4" fill="#222336" opacity="0.7"/></svg>
<svg class="a" style="left:396px;top:11.2px;overflow:visible" width="21" height="14.5" viewBox="0 0 21 14.5"><rect x="1.2" y="1.2" width="18.6" height="12" rx="6" fill="none" stroke="#2fb4c4" stroke-width="2.3"/><circle cx="7" cy="7.2" r="3.6" fill="#2fb4c4"/></svg>
<svg class="a" style="left:433.5px;top:11.2px;overflow:visible" width="16" height="16" viewBox="0 0 16 16"><circle cx="6.6" cy="6.6" r="5.6" fill="#bfc0d8"/><path d="M10.6 10.6 L15 15" stroke="#bfc0d8" stroke-width="2.4" stroke-linecap="round"/><path d="M4 6.6 H9.2" stroke="#222336" stroke-width="1.6"/></svg>
<svg class="a" style="left:457.2px;top:11.2px;overflow:visible" width="16" height="16" viewBox="0 0 16 16"><circle cx="6.6" cy="6.6" r="5.6" fill="#bfc0d8"/><path d="M10.6 10.6 L15 15" stroke="#bfc0d8" stroke-width="2.4" stroke-linecap="round"/><path d="M4 6.6 H9.2" stroke="#222336" stroke-width="1.6"/><path d="M6.6 4 V9.2" stroke="#222336" stroke-width="1.6"/></svg>
<svg class="a" style="left:486px;top:11px;overflow:visible" width="15" height="15" viewBox="0 0 15 15"><path d="M7.5 1 L0.8 7 M7.5 1 L14.2 7 M2.6 5.6 V14 H5.8 V9.6 H9.2 V14 H12.4 V5.6 M10.8 2.2 V4.4" fill="none" stroke="#b8b9cc" stroke-width="1.3" stroke-linejoin="round" stroke-linecap="round"/></svg>
<div class="a " style="left:507.30px;top:12.05px;height:17px;line-height:17px;font-family:'Liberation Sans',sans-serif;font-size:12.4px;font-weight:400;color:#b4b5ca;white-space:pre;letter-spacing:-0.526px;">Home</div>
<svg class="a" style="left:576px;top:12.8px;overflow:visible" width="7" height="11" viewBox="0 0 7 12"><g fill="#b4b5ca"><path d="M1.4 0 H5.6 L7 3.4 L2.1 6.3 L0 3.2 Z"/><path d="M5.6 12 H1.4 L0 8.6 L4.9 5.7 L7 8.8 Z"/></g></svg>
<div class="a " style="left:589.50px;top:11.52px;height:18px;line-height:18px;font-family:'Liberation Sans',sans-serif;font-size:12.5px;font-weight:400;color:#b4b5ca;white-space:pre;letter-spacing:-0.023px;">Storage.sol</div>
<svg class="a" style="left:688px;top:15.5px;overflow:visible" width="11" height="9" viewBox="0 0 11 9"><path d="M3.2 0.6 Q1.6 0.6 1.6 2 V3.4 Q1.6 4.5 0.5 4.5 Q1.6 4.5 1.6 5.6 V7 Q1.6 8.4 3.2 8.4 M7.8 0.6 Q9.4 0.6 9.4 2 V3.4 Q9.4 4.5 10.5 4.5 Q9.4 4.5 9.4 5.6 V7 Q9.4 8.4 7.8 8.4" fill="none" stroke="#b8b9cc" stroke-width="1.3" stroke-linecap="round"/></svg>
<div class="a " style="left:704.00px;top:11.17px;height:18px;line-height:18px;font-family:'Liberation Sans',sans-serif;font-size:12.5px;font-weight:400;color:#ffffff;white-space:pre;letter-spacing:-0.019px;-webkit-text-stroke:0.2px #ffffff;">a69b43f277ba20fcac141151250ca755.json</div>
<svg class="a" style="left:950.5px;top:15.8px;overflow:visible" width="10" height="10" viewBox="0 0 10 10"><path d="M1 1 L9 9 M9 1 L1 9" stroke="#c8c9d6" stroke-width="1.6" stroke-linecap="round"/></svg>
<svg class="a" style="left:978px;top:15.8px;overflow:visible" width="11" height="9" viewBox="0 0 11 9"><path d="M3.2 0.6 Q1.6 0.6 1.6 2 V3.4 Q1.6 4.5 0.5 4.5 Q1.6 4.5 1.6 5.6 V7 Q1.6 8.4 3.2 8.4 M7.8 0.6 Q9.4 0.6 9.4 2 V3.4 Q9.4 4.5 10.5 4.5 Q9.4 4.5 9.4 5.6 V7 Q9.4 8.4 7.8 8.4" fill="none" stroke="#b4b5ca" stroke-width="1.3" stroke-linecap="round"/></svg>
<div class="a " style="left:994.25px;top:11.52px;height:18px;line-height:18px;font-family:'Liberation Sans',sans-serif;font-size:12.5px;font-weight:400;color:#b4b5ca;white-space:pre;letter-spacing:-0.040px;">Storage.json</div>
<svg class="a" style="left:1100.5px;top:12.8px;overflow:visible" width="7" height="11" viewBox="0 0 7 12"><g fill="#b4b5ca"><path d="M1.4 0 H5.6 L7 3.4 L2.1 6.3 L0 3.2 Z"/><path d="M5.6 12 H1.4 L0 8.6 L4.9 5.7 L7 8.8 Z"/></g></svg>
<div class="a " style="left:1114.25px;top:11.52px;height:18px;line-height:18px;font-family:'Liberation Sans',sans-serif;font-size:12.5px;font-weight:400;color:#b4b5ca;white-space:pre;letter-spacing:-0.011px;">3_Ballot.sol</div>
<div class="a" style="left:329px;top:722px;width:1271px;height:32px;background:#2a2c3f"></div>
<svg class="a" style="left:336.5px;top:732.5px;overflow:visible" width="10" height="13" viewBox="0 0 10 13"><path d="M1.2 1.2 L5 5 L8.8 1.2 M1.2 6.6 L5 10.4 L8.8 6.6" fill="none" stroke="#a9aac4" stroke-width="1.5" stroke-linecap="round" stroke-linejoin="round"/></svg>
<div class="a " style="left:1079.20px;top:729.53px;height:18px;line-height:18px;font-family:'Liberation Sans',sans-serif;font-size:12.6px;font-weight:400;color:#b8b9cc;white-space:pre;">0</div>
<div class="a" style="left:1109.3px;top:731.5px;width:14.5px;height:14.7px;border:1px solid #4b4e63;border-radius:2.5px;background:#2a2c3f"></div>
<div class="a " style="left:1131.70px;top:730.16px;height:18px;line-height:18px;font-family:'Liberation Sans',sans-serif;font-size:12.8px;font-weight:400;color:#b8b9cc;white-space:pre;letter-spacing:-0.063px;">Listen on all transactions</div>
<svg class="a" style="left:1293.5px;top:734px;overflow:visible" width="13" height="12" viewBox="0 0 13 12"><circle cx="5" cy="5" r="3.9" fill="none" stroke="#b8b9cc" stroke-width="1.7"/><path d="M7.9 7.9 L11.4 11.2" stroke="#b8b9cc" stroke-width="1.9" stroke-linecap="round"/></svg>
<div class="a" style="left:1315.5px;top:723.4px;width:255px;height:31.2px;background:#34364a;border:1px solid #3d4055;border-radius:3px"></div>
<div class="a " style="left:1327.30px;top:729.29px;height:19px;line-height:19px;font-family:'Liberation Sans',sans-serif;font-size:13.3px;font-weight:400;color:#8d8ea6;white-space:pre;letter-spacing:0.089px;">Filter with transaction hash or address</div>
<svg class="a" style="left:1582px;top:732.6px;overflow:visible" width="13.5" height="13.5" viewBox="0 0 13.5 13.5"><circle cx="6.7" cy="6.7" r="5.4" fill="none" stroke="#b8b9cc" stroke-width="1.7"/><path d="M3 3 L10.4 10.4" stroke="#b8b9cc" stroke-width="1.7"/></svg>
<div class="a " style="left:366.00px;top:757.33px;height:17px;line-height:17px;font-family:'Liberation Mono',monospace;font-size:11.9px;font-weight:400;color:#c4c5d6;white-space:pre;letter-spacing:-0.478px;-webkit-text-stroke:0.2px currentColor;">Type the library name to see available commands.</div>
<div class="a " style="left:366.00px;top:771.77px;height:15px;line-height:15px;font-family:'Liberation Mono',monospace;font-size:11.0px;font-weight:400;color:#c4c5d6;white-space:pre;letter-spacing:-0.642px;-webkit-text-stroke:0.2px currentColor;">creation of Storage pending...</div>
<svg class="a" style="left:365.6px;top:816.2px;overflow:visible" width="19.6" height="19.6" viewBox="0 0 19.6 19.6"><circle cx="9.8" cy="9.8" r="9.6" fill="#32ba89"/><path d="M5.8 10 L8.6 12.8 L13.8 7.4" fill="none" stroke="#1b2533" stroke-width="2" stroke-linecap="round" stroke-linejoin="round"/></svg>
<div class="a" style="left:403.35px;top:817.80px;height:16px;line-height:16px;font-family:'Liberation Mono',monospace;font-size:11.0px;font-weight:700;letter-spacing:0.020px;color:#c0c1d4;white-space:pre;-webkit-text-stroke:0.15px currentColor">[block:5583405 txIndex:4]</div>
<div class="a" style="left:579.70px;top:817.80px;height:16px;line-height:16px;font-family:'Liberation Mono',monospace;font-size:11.0px;font-weight:700;letter-spacing:0.020px;color:#c0c1d4;white-space:pre;-webkit-text-stroke:0.15px currentColor">from:</div>
<div class="a" style="left:620.20px;top:817.80px;height:16px;line-height:16px;font-family:'Liberation Mono',monospace;font-size:11.0px;font-weight:400;letter-spacing:0.020px;color:#c0c1d4;white-space:pre;-webkit-text-stroke:0.15px currentColor">0xa03...85ac4</div>
<div class="a" style="left:711.80px;top:817.80px;height:16px;line-height:16px;font-family:'Liberation Mono',monospace;font-size:11.0px;font-weight:700;letter-spacing:0.020px;color:#c0c1d4;white-space:pre;-webkit-text-stroke:0.15px currentColor">to:</div>
<div class="a" style="left:738.35px;top:817.80px;height:16px;line-height:16px;font-family:'Liberation Mono',monospace;font-size:11.0px;font-weight:400;letter-spacing:0.020px;color:#c0c1d4;white-space:pre;-webkit-text-stroke:0.15px currentColor">Storage.(constructor)</div>
<div class="a" style="left:883.40px;top:817.80px;height:16px;line-height:16px;font-family:'Liberation Mono',monospace;font-size:11.0px;font-weight:700;letter-spacing:0.020px;color:#c0c1d4;white-space:pre;-webkit-text-stroke:0.15px currentColor">value:</div>
<div class="a" style="left:930.30px;top:817.80px;height:16px;line-height:16px;font-family:'Liberation Mono',monospace;font-size:11.0px;font-weight:400;letter-spacing:0.020px;color:#c0c1d4;white-space:pre;-webkit-text-stroke:0.15px currentColor">0 wei</div>
<div class="a" style="left:968.00px;top:817.80px;height:16px;line-height:16px;font-family:'Liberation Mono',monospace;font-size:11.0px;font-weight:700;letter-spacing:0.020px;color:#c0c1d4;white-space:pre;-webkit-text-stroke:0.15px currentColor">data:</div>
<div class="a" style="left:1009.00px;top:817.80px;height:16px;line-height:16px;font-family:'Liberation Mono',monospace;font-size:11.0px;font-weight:400;letter-spacing:0.020px;color:#c0c1d4;white-space:pre;-webkit-text-stroke:0.15px currentColor">0x608...30033</div>
<div class="a" style="left:1100.50px;top:817.80px;height:16px;line-height:16px;font-family:'Liberation Mono',monospace;font-size:11.0px;font-weight:700;letter-spacing:0.020px;color:#c0c1d4;white-space:pre;-webkit-text-stroke:0.15px currentColor">logs:</div>
<div class="a" style="left:1140.50px;top:817.80px;height:16px;line-height:16px;font-family:'Liberation Mono',monospace;font-size:11.0px;font-weight:400;letter-spacing:0.020px;color:#c0c1d4;white-space:pre;-webkit-text-stroke:0.15px currentColor">0</div>
<div class="a" style="left:1152.50px;top:817.80px;height:16px;line-height:16px;font-family:'Liberation Mono',monospace;font-size:11.0px;font-weight:700;letter-spacing:0.020px;color:#c0c1d4;white-space:pre;-webkit-text-stroke:0.15px currentColor">hash:</div>
<div class="a" style="left:1192.30px;top:817.80px;height:16px;line-height:16px;font-family:'Liberation Mono',monospace;font-size:11.0px;font-weight:400;letter-spacing:0.020px;color:#c0c1d4;white-space:pre;-webkit-text-stroke:0.15px currentColor">0x76d...57ad9</div>
<div class="a" style="left:1481.8px;top:812.4px;width:50px;height:26.4px;background:#007aa6;border-radius:2px"></div>
<div class="a " style="left:1490.00px;top:818.35px;height:16px;line-height:16px;font-family:'Liberation Sans',sans-serif;font-size:11.4px;font-weight:700;color:#ffffff;white-space:pre;letter-spacing:-0.366px;">Debug</div>
<svg class="a" style="left:1541.5px;top:820.5px;overflow:visible" width="15" height="9.5" viewBox="0 0 15 9.5"><path d="M1.2 1.5 L7.5 7.8 L13.8 1.5" fill="none" stroke="#b8b9cc" stroke-width="2" stroke-linecap="round" stroke-linejoin="round"/></svg>
<div class="a" style="left:1587px;top:828.2px;width:7.7px;height:36.6px;background:#45485b;border-radius:4px"></div>
<div class="a " style="left:336.50px;top:872.14px;height:16px;line-height:16px;font-family:'Liberation Mono',monospace;font-size:11.5px;font-weight:700;color:#d0d1de;white-space:pre;">&gt;</div>
<div class="a" style="left:0;top:898px;width:1600px;height:10px;background:#365a70"></div>
<div class="a" style="left:1514px;top:898px;width:86px;height:10px;background:#c97539"></div>
<div class="a " style="left:18.00px;top:902.10px;height:18px;line-height:18px;font-family:'Liberation Sans',sans-serif;font-size:13px;font-weight:400;color:#e6e8ee;white-space:pre;letter-spacing:-0.066px;">Initializing...</div>
<div class="a" style="left:514px;top:905px;width:7px;height:7px;border-radius:50%;background:#32ba89"></div>
<div class="a " style="left:530.00px;top:902.10px;height:18px;line-height:18px;font-family:'Liberation Sans',sans-serif;font-size:13px;font-weight:400;color:#e6e8ee;white-space:pre;letter-spacing:0.076px;">Did you know?  Try the new Remix AI features with a single click on the</div>
<div class="a " style="left:1385.00px;top:902.10px;height:18px;line-height:18px;font-family:'Liberation Sans',sans-serif;font-size:13px;font-weight:400;color:#e6e8ee;white-space:pre;letter-spacing:-0.521px;">Feedback  Docs  Help</div>
<div class="a " style="left:1523.00px;top:902.10px;height:18px;line-height:18px;font-family:'Liberation Sans',sans-serif;font-size:13px;font-weight:400;color:#f4f0ea;white-space:pre;letter-spacing:-1.011px;">▲ Scam Alrt</div>
<div class="a" style="left:399px;top:55px;width:1082.2px;height:608.6px;border:3px solid #f5230f;box-shadow:0 0 0 1px rgba(10,40,55,0.8), inset 0 0 0 1px rgba(10,40,55,0.8)"></div>
</body></html>
